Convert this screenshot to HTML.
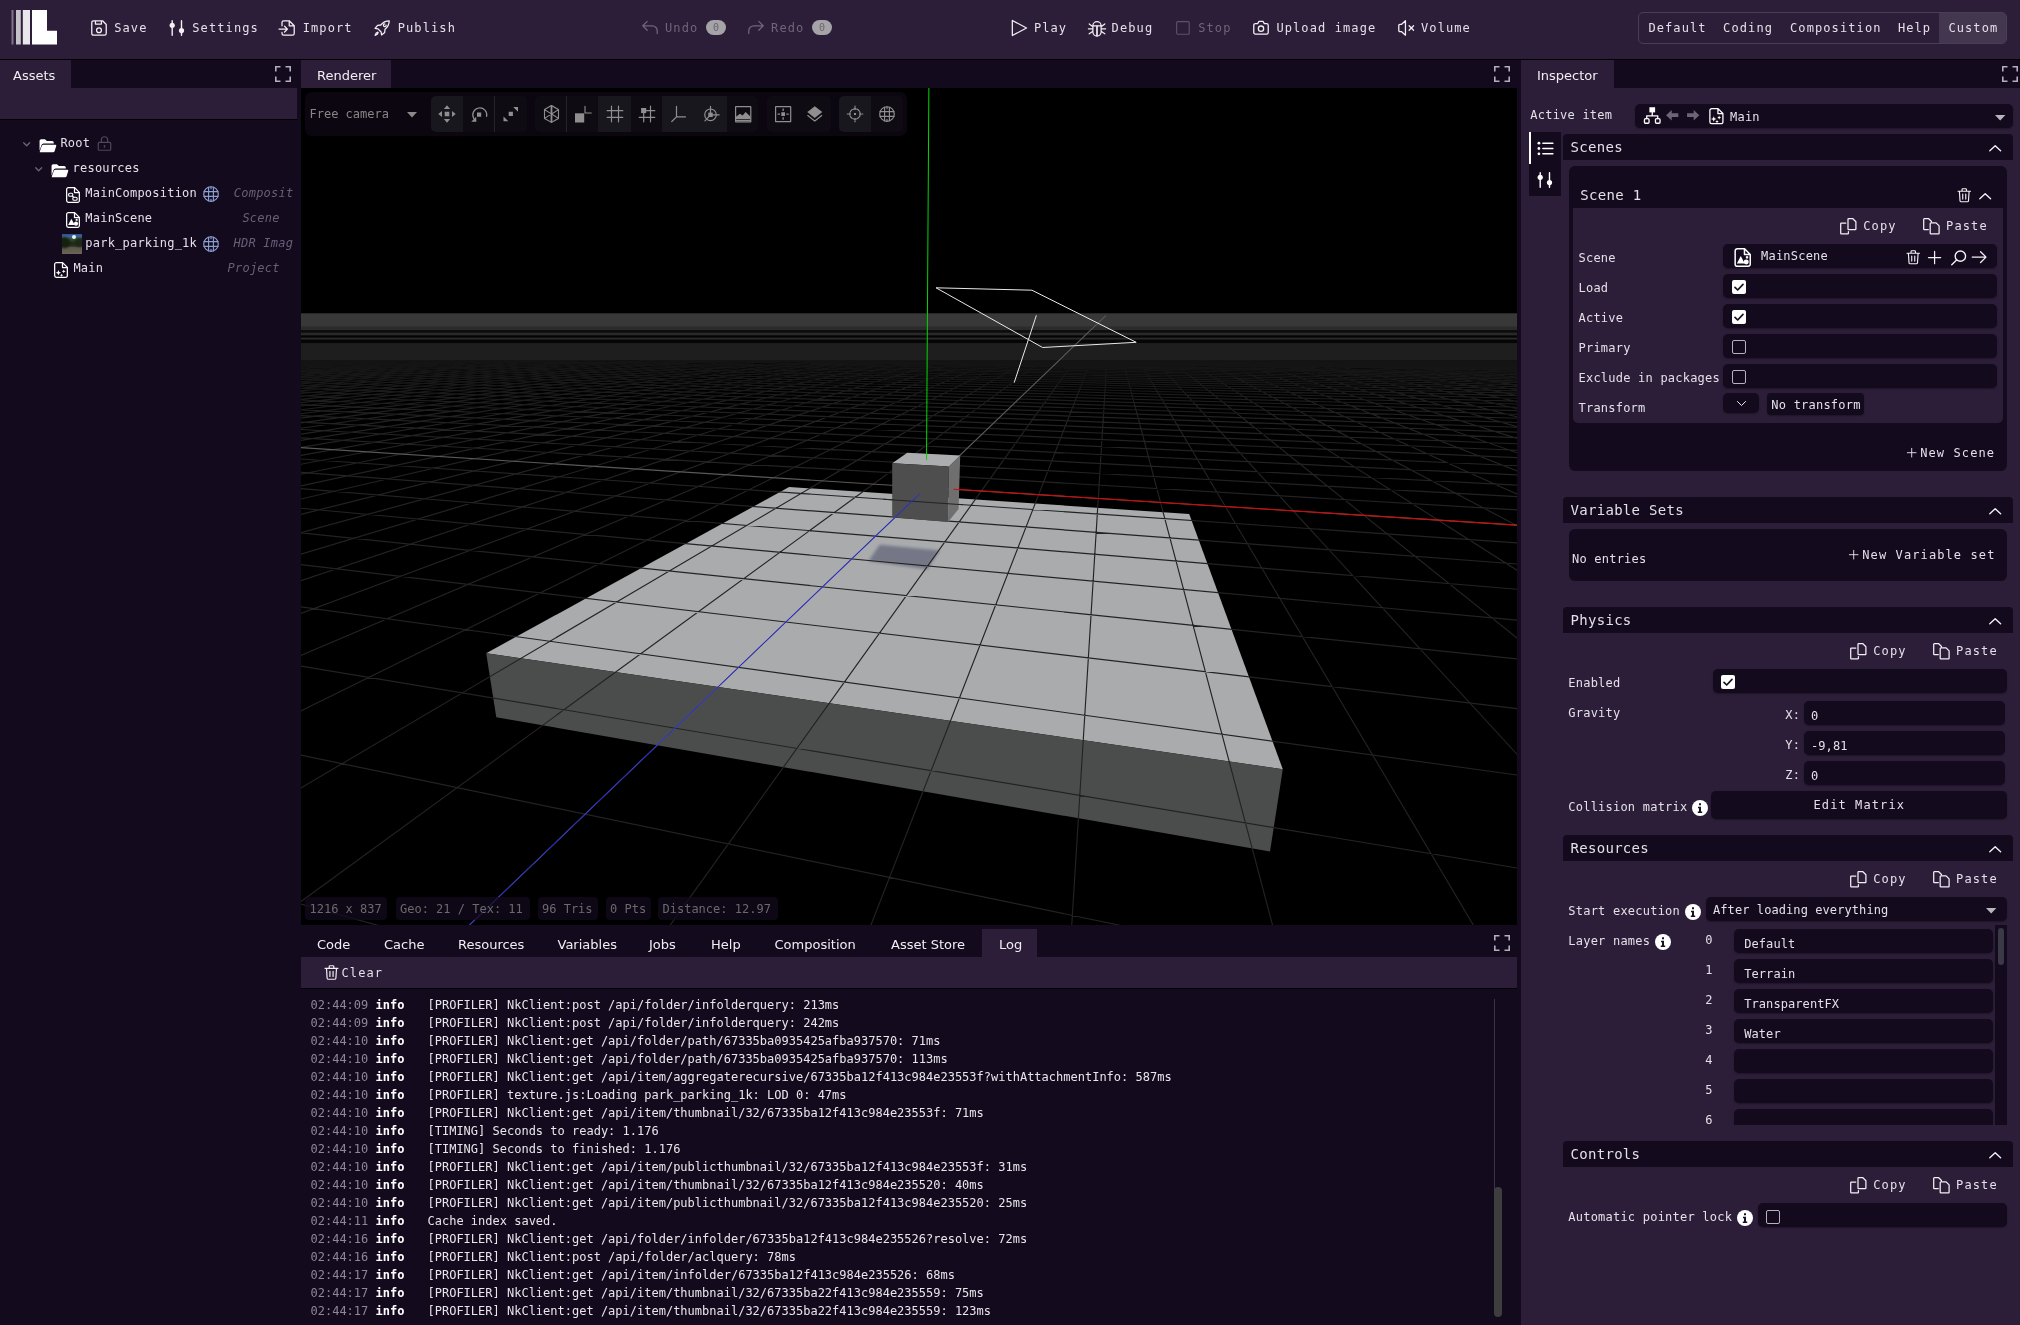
<!DOCTYPE html>
<html lang="en"><head><meta charset="utf-8"><title>Editor</title><style>
*{box-sizing:border-box;margin:0;padding:0}
html,body{width:2020px;height:1325px;overflow:hidden;background:#130a1e}
body{position:relative;font-family:"DejaVu Sans Mono","Liberation Mono",monospace;font-size:12px;color:#e4e0e8;line-height:16px}
.a{position:absolute}
.ic{position:absolute;overflow:visible}
.t{position:absolute;white-space:pre;height:16px;line-height:16px;letter-spacing:.22px}
.t.ls{letter-spacing:1.100px}
#w{position:absolute;left:0;top:0;width:2020px;height:1325px;will-change:transform}
.tab{position:absolute;font-family:"DejaVu Sans","Liberation Sans",sans-serif;font-size:13px;height:28px;line-height:28px;margin-top:1.700px;color:#f0eef2;white-space:pre}
.dim{color:#6f6479}
.h14{font-size:14px;letter-spacing:.3px;height:18px;line-height:18px}
.pill{position:absolute;background:rgba(19,10,30,.72);border-radius:4px;height:23px;top:809px}
.fld{position:absolute;background:#130a1e;border-radius:4px;box-shadow:0 1px 2px rgba(0,0,0,.35)}
.cb{position:absolute;width:14px;height:14px;border-radius:2px}
.cb.on{background:#fff}
.cb.off{border:1.5px solid #b7b1bc}
.log{position:absolute;left:0;white-space:pre;height:18px;line-height:18px;color:#e8e6ea}
.log b{font-weight:bold;color:#fff}
.log i{font-style:normal;color:#8d8796}
</style></head><body>
<div id="w">
<header id="toolbar"><div class="a" style="left:0;top:0;width:2020px;height:59px;background:#2c1e38"></div>
<div class="a" style="left:0;top:59px;width:2020px;height:1px;background:#000"></div>
<svg class="ic" style="left:0;top:0" width="70" height="59" viewBox="0 0 70 59"><rect x="11.5" y="10" width="2" height="34.500" fill="#7d7487"/><rect x="16" y="10" width="4.800" height="34.500" fill="#c6c2ca"/><rect x="22.800" y="10" width="7.200" height="34.500" fill="#e9e7eb"/><path d="M32 10h15v20.700h10V44.500H32z" fill="#fff"/></svg>
<svg class="ic " width="16" height="16" viewBox="0.800 0.800 14.400 14.400" style="left:91px;top:20px;color:#f2f0f4;"><path fill="none" stroke="currentColor" stroke-linecap="round" stroke-linejoin="round" stroke-width="1.150" d="M3 1.5h8.2L14.5 4.8V13a1.5 1.5 0 0 1-1.5 1.5H3A1.5 1.5 0 0 1 1.5 13V3A1.5 1.5 0 0 1 3 1.5zM4.8 1.7v2.8h5.4V1.7"/><circle fill="none" stroke="currentColor" stroke-linecap="round" stroke-linejoin="round" stroke-width="1.150" cx="8" cy="10" r="2.2"/></svg>
<span class="t ls" style="left:114.2px;top:20px;">Save</span>
<svg class="ic " width="16" height="16" viewBox="0 0 16 16" style="left:169px;top:20px;color:#f2f0f4;"><path fill="none" stroke="currentColor" stroke-linecap="round" stroke-linejoin="round" stroke-width="1.400" d="M3.200 0.700v14.600M12.500 0.700v14.600"/><circle fill="currentColor" stroke="none" cx="3.200" cy="5.300" r="2.600"/><circle fill="currentColor" stroke="none" cx="12.500" cy="10.600" r="2.600"/></svg>
<span class="t ls" style="left:192.3px;top:20px;">Settings</span>
<svg class="ic " width="16" height="16" viewBox="0.800 0.800 14.400 14.400" style="left:279px;top:20px;color:#f2f0f4;"><path fill="none" stroke="currentColor" stroke-linecap="round" stroke-linejoin="round" stroke-width="1.150" d="M3.5 6V3A1.5 1.5 0 0 1 5 1.5h5l4.5 4.5V13a1.5 1.5 0 0 1-1.5 1.5H5A1.5 1.5 0 0 1 3.5 13v-1M10 1.7V6h4.3M0.8 9h7.4M5.8 6.4L8.4 9l-2.6 2.6"/></svg>
<span class="t ls" style="left:302.7px;top:20px;">Import</span>
<svg class="ic " width="16" height="16" viewBox="0.800 0.800 14.400 14.400" style="left:374px;top:20px;color:#f2f0f4;"><path fill="none" stroke="currentColor" stroke-linecap="round" stroke-linejoin="round" stroke-width="1.150" d="M14.5 1.5c-3.2 0-5.6 1.2-7.6 3.8L4 5.6 1.8 8.4l2.6.4 2.8 2.8.4 2.6 2.8-2.2.3-2.9c2.6-2 3.8-4.4 3.8-7.600zM4.2 11.800c-1.200.3-2 1.300-2.400 2.800 1.500-.4 2.500-1.200 2.800-2.400M10.500 4.300a1.200 1.200 0 1 0 1.200 1.200"/></svg>
<span class="t ls" style="left:397.7px;top:20px;">Publish</span>
<svg class="ic " width="16" height="16" viewBox="0.800 0.800 14.400 14.400" style="left:642px;top:20px;color:#6f6479;"><path fill="none" stroke="currentColor" stroke-linecap="round" stroke-linejoin="round" stroke-width="1.150" d="M5.500 2L1.500 6l4 4M1.800 6H10a4.500 4.500 0 0 1 4.500 4.500V13"/></svg>
<span class="t ls dim" style="left:665.0px;top:20px;">Undo</span>
<svg class="ic " width="16" height="16" viewBox="0.800 0.800 14.400 14.400" style="left:748px;top:20px;color:#6f6479;"><path fill="none" stroke="currentColor" stroke-linecap="round" stroke-linejoin="round" stroke-width="1.150" d="M10.500 2l4 4-4 4M14.200 6H6A4.500 4.500 0 0 0 1.500 10.500V13"/></svg>
<span class="t ls dim" style="left:771.1px;top:20px;">Redo</span>
<svg class="ic " width="16" height="16" viewBox="0.800 0.800 14.400 14.400" style="left:1011px;top:20px;color:#f2f0f4;"><path fill="none" stroke="currentColor" stroke-linecap="round" stroke-linejoin="round" stroke-width="1.150" d="M2 1.200L14.800 8 2 14.800z"/></svg>
<span class="t ls" style="left:1033.9px;top:20px;">Play</span>
<svg class="ic" width="18" height="16.500" viewBox="0 0 18 16.500" style="left:1088px;top:19.600px;color:#f2f0f4"><path fill="none" stroke="currentColor" stroke-linecap="round" stroke-linejoin="round" stroke-width="1.250" d="M4.900 5.800a4.100 4.100 0 0 1 8.200 0v6.200a4.100 4.100 0 0 1-8.200 0zM5 5.800h8M0.400 8.800h4.500M13.100 8.800h4.500M1.200 4l3.700 2.800M16.800 4l-3.700 2.800M1.200 13.800l3.700-2.600M16.800 13.800l-3.700-2.600"/><path fill="none" stroke="currentColor" stroke-linecap="round" stroke-linejoin="round" stroke-width="1.700" d="M9 6.400v9"/></svg>
<span class="t ls" style="left:1111.6px;top:20px;">Debug</span>
<svg class="ic " width="13.9" height="13.9" viewBox="0.800 0.800 14.400 14.400" style="left:1176px;top:21px;color:#5d5268;"><rect fill="none" stroke="currentColor" stroke-linecap="round" stroke-linejoin="round" stroke-width="1.150" x="1.500" y="1.500" width="13" height="13" rx="1"/></svg>
<span class="t ls dim" style="left:1198.2px;top:20px;">Stop</span>
<svg class="ic " width="16" height="16" viewBox="0.800 0.800 14.400 14.400" style="left:1253px;top:20px;color:#f2f0f4;"><path fill="none" stroke="currentColor" stroke-linecap="round" stroke-linejoin="round" stroke-width="1.150" d="M1.500 5.500A1.500 1.500 0 0 1 3 4h2l1.200-2h3.600L11 4h2a1.500 1.500 0 0 1 1.500 1.500V12a1.500 1.500 0 0 1-1.500 1.500H3A1.500 1.500 0 0 1 1.500 12z"/><circle fill="none" stroke="currentColor" stroke-linecap="round" stroke-linejoin="round" stroke-width="1.150" cx="8" cy="8.600" r="2.400"/></svg>
<span class="t ls" style="left:1276.4px;top:20px;">Upload image</span>
<svg class="ic " width="16" height="16" viewBox="0.800 0.800 14.400 14.400" style="left:1397.5px;top:20px;color:#f2f0f4;"><path fill="none" stroke="currentColor" stroke-linecap="round" stroke-linejoin="round" stroke-width="1.150" d="M7.500 1.500v13L3.800 11.200H2.500a1 1 0 0 1-1-1V5.800a1 1 0 0 1 1-1h1.300zM10.800 6l4 4M14.800 6l-4 4"/></svg>
<span class="t ls" style="left:1421.0px;top:20px;">Volume</span>
<div class="a" style="left:706px;top:20px;width:20px;height:15px;border-radius:8px;background:#a5a2a8;color:#6b6670;font-size:10px;line-height:15px;text-align:center">0</div>
<div class="a" style="left:812px;top:20px;width:20px;height:15px;border-radius:8px;background:#a5a2a8;color:#6b6670;font-size:10px;line-height:15px;text-align:center">0</div>
<div class="a" style="left:1638px;top:12px;width:369px;height:32px;border:1px solid #4a3d56;border-radius:5px"></div>
<div class="a" style="left:1939px;top:13px;width:67px;height:30px;background:#43364f;border-radius:0 4px 4px 0"></div>
<span class="t ls" style="left:1648.4px;top:20px;">Default</span>
<span class="t ls" style="left:1723.1px;top:20px;">Coding</span>
<span class="t ls" style="left:1790.0px;top:20px;">Composition</span>
<span class="t ls" style="left:1897.9px;top:20px;">Help</span>
<span class="t ls" style="left:1948.4px;top:20px;">Custom</span></header>
<aside id="assets"><div class="a" style="left:0px;top:60px;width:71px;height:28px;background:#2c1e38;"></div>
<span class="tab" style="left:13px;top:60px">Assets</span>
<svg class="ic " width="16" height="16" viewBox="0 0 16 16" style="left:275px;top:66px;color:#b5adbd;"><path fill="none" stroke="currentColor" stroke-width="1.600" d="M0.800 5.500V0.800H5.500M10.500 0.800h4.700V5.500M15.200 10.500v4.700H10.500M5.500 15.200H0.800V10.500"/></svg>
<div class="a" style="left:0px;top:88px;width:297px;height:31px;background:#2c1e38;"></div>
<div class="a" style="left:0px;top:119px;width:297px;height:1px;background:#000;"></div>
<svg class="ic " width="7.4" height="4.4" viewBox="0 0 7.4 4.4" style="left:22.500px;top:141.700px"><path fill="none" stroke="#6d6478" stroke-width="1.300" stroke-linecap="round" stroke-linejoin="round" d="M0.700 0.700l3 3 3-3"/></svg>
<svg class="ic " width="17.5" height="17.5" viewBox="0 0 16 16" style="left:38.8px;top:136.5px;color:#fff;"><path fill="currentColor" stroke="none" d="M0.500 3.500A1.500 1.500 0 0 1 2 2h3.400l1.800 1.600H12A1.500 1.500 0 0 1 13.500 5.100V6H4.200a2 2 0 0 0-1.900 1.400L0.500 12.600z"/><path fill="currentColor" stroke="none" d="M4.200 7h10.600a1 1 0 0 1 .95 1.300l-1.500 4.700a1.500 1.500 0 0 1-1.430 1H1.300a.6.6 0 0 1-.57-.8L2.500 8.200A1.800 1.800 0 0 1 4.200 7z"/></svg>
<span class="t " style="left:60.4px;top:134.8px;">Root</span>
<svg class="ic " width="15" height="15" viewBox="0.800 0.800 14.400 14.400" style="left:96.8px;top:136px;color:#4f4658;"><path fill="none" stroke="currentColor" stroke-linecap="round" stroke-linejoin="round" stroke-width="1.150" d="M3 7h10a1 1 0 0 1 1 1v5.500a1 1 0 0 1-1 1H3a1 1 0 0 1-1-1V8a1 1 0 0 1 1-1zM5 7V4.500a3 3 0 0 1 6 0V7"/><path fill="currentColor" stroke="none" d="M7.300 9.500h1.400v2.500H7.300z"/></svg>
<svg class="ic " width="7.4" height="4.4" viewBox="0 0 7.4 4.4" style="left:34.600px;top:166.700px"><path fill="none" stroke="#6d6478" stroke-width="1.300" stroke-linecap="round" stroke-linejoin="round" d="M0.700 0.700l3 3 3-3"/></svg>
<svg class="ic " width="17.5" height="17.5" viewBox="0 0 16 16" style="left:51px;top:161.5px;color:#fff;"><path fill="currentColor" stroke="none" d="M0.500 3.500A1.500 1.500 0 0 1 2 2h3.400l1.800 1.600H12A1.500 1.500 0 0 1 13.500 5.100V6H4.200a2 2 0 0 0-1.900 1.400L0.500 12.600z"/><path fill="currentColor" stroke="none" d="M4.200 7h10.600a1 1 0 0 1 .95 1.300l-1.500 4.700a1.500 1.500 0 0 1-1.430 1H1.300a.6.6 0 0 1-.57-.8L2.500 8.200A1.800 1.800 0 0 1 4.200 7z"/></svg>
<span class="t " style="left:72.6px;top:159.8px;">resources</span>
<svg class="ic" width="14" height="16" viewBox="0 0 14 16" style="left:66px;top:187.2px;color:#fff"><path fill="none" stroke="currentColor" stroke-linecap="round" stroke-linejoin="round" stroke-width="1.250" d="M2.400 0.650h6.200l4.750 4.750v8.200a1.750 1.750 0 0 1-1.750 1.750H2.400A1.750 1.750 0 0 1 .650 13.600V2.400A1.750 1.750 0 0 1 2.400.650zM8.500 0.900v4.600h4.600"/><rect fill="none" stroke="currentColor" stroke-linecap="round" stroke-linejoin="round" stroke-width="1.100" x="2.600" y="6.300" width="4.200" height="2.900" rx="1.300"/><rect fill="none" stroke="currentColor" stroke-linecap="round" stroke-linejoin="round" stroke-width="1.100" x="6.800" y="10.300" width="4.400" height="2.900" rx="1.300"/><path fill="none" stroke="currentColor" stroke-linecap="round" stroke-linejoin="round" stroke-width="1.100" d="M6.300 9l1.600 1.500"/></svg>
<span class="t " style="left:85.3px;top:184.8px;">MainComposition</span>
<svg class="ic " width="16" height="16" viewBox="0 0 16 16" style="left:203px;top:185.8px;color:#8c9fd0;"><circle fill="none" stroke="currentColor" stroke-linecap="round" stroke-linejoin="round" stroke-width="1.150" cx="8" cy="8" r="7.300"/><path fill="none" stroke="currentColor" stroke-linecap="round" stroke-linejoin="round" stroke-width="1.150" d="M1 5.600h14M1 10.400h14M5.600 1.200v13.600M10.400 1.200v13.600M8 0.700v2M8 13.300v2"/></svg>
<span class="t " style="left:233.8px;top:184.8px;font-style:italic;color:#6b5f77">Composit</span>
<svg class="ic" width="14" height="16" viewBox="0 0 14 16" style="left:66px;top:212.1px;color:#fff"><path fill="none" stroke="currentColor" stroke-linecap="round" stroke-linejoin="round" stroke-width="1.250" d="M2.400 0.650h6.200l4.750 4.750v8.200a1.750 1.750 0 0 1-1.750 1.750H2.400A1.750 1.750 0 0 1 .650 13.600V2.400A1.750 1.750 0 0 1 2.400.650zM8.500 0.900v4.600h4.600"/><path fill="currentColor" stroke="none" d="M2.100 13l3.300-6.300 3.300 6.300z"/><circle fill="currentColor" stroke="none" cx="10" cy="11.700" r="2.100"/><path fill="currentColor" stroke="none" d="M9.700 6.900h1.900v1.900H9.700z"/></svg>
<span class="t " style="left:85.3px;top:209.8px;">MainScene</span>
<span class="t " style="left:242.4px;top:209.8px;font-style:italic;color:#6b5f77">Scene</span>
<div class="a" style="left:62px;top:234px;width:20px;height:20px;overflow:hidden;background:linear-gradient(#2f4f86 0,#3e64a0 12%,#33502f 26%,#1d2a18 45%,#2a3020 60%,#5c574a 68%,#6b6557 100%)"><div class="a" style="left:-3px;top:3px;width:11px;height:11px;border-radius:6px;background:#16200f;filter:blur(.8px)"></div><div class="a" style="left:13px;top:4px;width:9px;height:9px;border-radius:5px;background:#1c2914;filter:blur(.8px)"></div><div class="a" style="left:10px;top:1px;width:4px;height:4px;border-radius:2px;background:#e8f0fa;filter:blur(.7px)"></div></div>
<span class="t " style="left:85.3px;top:234.8px;">park_parking_1k</span>
<svg class="ic " width="16" height="16" viewBox="0 0 16 16" style="left:203px;top:236px;color:#8c9fd0;"><circle fill="none" stroke="currentColor" stroke-linecap="round" stroke-linejoin="round" stroke-width="1.150" cx="8" cy="8" r="7.300"/><path fill="none" stroke="currentColor" stroke-linecap="round" stroke-linejoin="round" stroke-width="1.150" d="M1 5.600h14M1 10.400h14M5.600 1.200v13.600M10.400 1.200v13.600M8 0.700v2M8 13.300v2"/></svg>
<span class="t " style="left:233.6px;top:234.8px;font-style:italic;color:#6b5f77">HDR Imag</span>
<svg class="ic" width="14" height="16" viewBox="0 0 14 16" style="left:54.1px;top:261.9px;color:#fff"><path fill="none" stroke="currentColor" stroke-linecap="round" stroke-linejoin="round" stroke-width="1.250" d="M2.400 0.650h6.200l4.750 4.750v8.200a1.750 1.750 0 0 1-1.750 1.750H2.400A1.750 1.750 0 0 1 .650 13.600V2.400A1.750 1.750 0 0 1 2.400.650zM8.500 0.900v4.600h4.600"/><path fill="currentColor" stroke="none" d="M4.400 8l.8 1.900 1.900.8-1.900.8-.8 1.900-.8-1.900-1.900-.8 1.900-.8zM9.700 7.400l.6 1.300 1.300.6-1.300.6-.6 1.300-.6-1.300-1.300-.6 1.300-.6zM7.600 11.700l.5 1.100 1.100.5-1.100.5-.5 1.100-.5-1.100-1.100-.5 1.100-.5z"/></svg>
<span class="t " style="left:73.4px;top:259.8px;">Main</span>
<span class="t " style="left:227.6px;top:259.8px;font-style:italic;color:#6b5f77">Project</span></aside>
<main id="center"><div class="a" style="left:301px;top:60px;width:90px;height:28px;background:#2c1e38;"></div>
<span class="tab" style="left:317px;top:60px">Renderer</span>
<svg class="ic " width="16" height="16" viewBox="0 0 16 16" style="left:1494px;top:66px;color:#b5adbd;"><path fill="none" stroke="currentColor" stroke-width="1.600" d="M0.800 5.500V0.800H5.500M10.500 0.800h4.700V5.500M15.200 10.500v4.700H10.500M5.500 15.200H0.800V10.500"/></svg>
<div class="a" style="left:301px;top:88px;width:1216px;height:837px;overflow:hidden"><svg class="scene" width="1216" height="837" viewBox="0 0 1216 837">
<defs><filter id="sb" x="-30%" y="-30%" width="160%" height="160%"><feGaussianBlur stdDeviation="1.700"/></filter><linearGradient id="dk" x1="0" y1="0" x2="0" y2="1"><stop offset="0" stop-color="#000" stop-opacity="0.55"/><stop offset="0.45" stop-color="#000" stop-opacity="0.45"/><stop offset="1" stop-color="#000" stop-opacity="0"/></linearGradient></defs>
<rect width="1216" height="837" fill="#000"/>
<polygon points="488.1,398.9 888.2,426.0 981.8,681.2 185.2,565.2" fill="#a9abad"/>
<polygon points="185.2,565.2 981.8,681.2 969.0,763.5 195.3,629.3" fill="#4b4d4c"/>
<polygon points="578.7,456.8 638.7,462.5 626.3,481.2 567.5,473.0" fill="#6f7283" opacity="0.9" filter="url(#sb)"/>
<path d="M197.3 229.8L-20.0 232.0M197.3 229.8L1236.0 232.5M198.9 229.8L-20.0 232.0M195.8 229.8L1236.0 232.5M200.5 229.8L-20.0 232.0M194.2 229.8L1236.0 232.6M202.1 229.8L-20.0 232.0M192.7 229.8L1236.0 232.6M203.8 229.8L-20.0 232.1M191.1 229.8L1236.0 232.6M205.4 229.8L-20.0 232.1M189.5 229.8L1236.0 232.7M207.0 229.8L-20.0 232.1M187.9 229.9L1236.0 232.7M208.6 229.8L-20.0 232.2M186.3 229.9L1236.0 232.7M210.2 229.8L-20.0 232.2M184.7 229.9L1236.0 232.7M211.8 229.8L-20.0 232.2M183.1 229.9L1236.0 232.8M213.4 229.8L-20.0 232.2M181.5 229.9L1236.0 232.8M215.1 229.8L-20.0 232.3M179.8 229.9L1236.0 232.8M216.7 229.8L-20.0 232.3M178.2 230.0L1236.0 232.9M218.3 229.8L-20.0 232.3M176.5 230.0L1236.0 232.9M219.9 229.8L-20.0 232.4M174.9 230.0L1236.0 232.9M221.6 229.8L-20.0 232.4M173.2 230.0L1236.0 233.0M223.2 229.8L-20.0 232.4M171.5 230.0L1236.0 233.0M224.8 229.8L-20.0 232.5M169.8 230.0L1236.0 233.0M226.5 229.8L-20.0 232.5M168.1 230.1L1236.0 233.1M228.1 229.8L-20.0 232.5M166.4 230.1L1236.0 233.1M229.7 229.9L-20.0 232.5M164.7 230.1L1236.0 233.1M231.4 229.9L-20.0 232.6M163.0 230.1L1236.0 233.1M233.0 229.9L-20.0 232.6M161.3 230.1L1236.0 233.2M234.7 229.9L-20.0 232.6M159.5 230.1L1236.0 233.2M236.3 229.9L-20.0 232.7M157.8 230.2L1236.0 233.2M238.0 229.9L-20.0 232.7M156.0 230.2L1236.0 233.3M239.6 229.9L-20.0 232.7M154.3 230.2L1236.0 233.3M241.3 229.9L-20.0 232.8M152.5 230.2L1236.0 233.4M243.0 229.9L-20.0 232.8M150.7 230.2L1236.0 233.4M244.6 229.9L-20.0 232.8M148.9 230.3L1236.0 233.4M246.3 229.9L-20.0 232.9M147.1 230.3L1236.0 233.5M248.0 229.9L-20.0 232.9M145.3 230.3L1236.0 233.5M249.6 229.9L-20.0 232.9M143.4 230.3L1236.0 233.5M251.3 229.9L-20.0 233.0M141.6 230.3L1236.0 233.6M253.0 229.9L-20.0 233.0M139.7 230.3L1236.0 233.6M254.7 229.9L-20.0 233.0M137.9 230.4L1236.0 233.6M256.3 229.9L-20.0 233.1M136.0 230.4L1236.0 233.7M258.0 229.9L-20.0 233.1M134.1 230.4L1236.0 233.7M259.7 229.9L-20.0 233.2M132.2 230.4L1236.0 233.7M261.4 229.9L-20.0 233.2M130.3 230.4L1236.0 233.8M263.1 229.9L-20.0 233.2M128.4 230.5L1236.0 233.8M264.8 229.9L-20.0 233.3M126.5 230.5L1236.0 233.9M266.5 229.9L-20.0 233.3M124.6 230.5L1236.0 233.9M268.1 230.0L-20.0 233.3M122.6 230.5L1236.0 233.9M269.8 230.0L-20.0 233.4M120.7 230.5L1236.0 234.0M271.5 230.0L-20.0 233.4M118.7 230.6L1236.0 234.0M273.3 230.0L-20.0 233.4M116.7 230.6L1236.0 234.0M275.0 230.0L-20.0 233.5M114.7 230.6L1236.0 234.1M276.7 230.0L-20.0 233.5M112.7 230.6L1236.0 234.1M278.4 230.0L-20.0 233.6M110.7 230.6L1236.0 234.2M280.1 230.0L-20.0 233.6M108.7 230.7L1236.0 234.2M281.8 230.0L-20.0 233.6M106.7 230.7L1236.0 234.2M283.5 230.0L-20.0 233.7M104.6 230.7L1236.0 234.3M285.2 230.0L-20.0 233.7M102.6 230.7L1236.0 234.3M287.0 230.0L-20.0 233.8M100.5 230.7L1236.0 234.4M288.7 230.0L-20.0 233.8M98.4 230.8L1236.0 234.4M290.4 230.0L-20.0 233.8M96.3 230.8L1236.0 234.5M292.1 230.0L-20.0 233.9M94.2 230.8L1236.0 234.5M293.9 230.0L-20.0 233.9M92.1 230.8L1236.0 234.5M295.6 230.0L-20.0 234.0M90.0 230.8L1236.0 234.6M297.3 230.0L-20.0 234.0M87.8 230.9L1236.0 234.6M299.1 230.0L-20.0 234.1M85.7 230.9L1236.0 234.7M300.8 230.0L-20.0 234.1M83.5 230.9L1236.0 234.7M302.6 230.0L-20.0 234.1M81.3 230.9L1236.0 234.8M304.3 230.0L-20.0 234.2M79.1 231.0L1236.0 234.8M306.1 230.1L-20.0 234.2M76.9 231.0L1236.0 234.8M307.8 230.1L-20.0 234.3M74.7 231.0L1236.0 234.9M309.6 230.1L-20.0 234.3M72.4 231.0L1236.0 234.9M311.3 230.1L-20.0 234.4M70.2 231.0L1236.0 235.0M313.1 230.1L-20.0 234.4M67.9 231.1L1236.0 235.0M314.9 230.1L-20.0 234.5M65.6 231.1L1236.0 235.1M316.6 230.1L-20.0 234.5M63.3 231.1L1236.0 235.1M318.4 230.1L-20.0 234.6M61.0 231.1L1236.0 235.2M320.2 230.1L-20.0 234.6M58.7 231.2L1236.0 235.2M321.9 230.1L-20.0 234.7M56.4 231.2L1236.0 235.3M323.7 230.1L-20.0 234.7M54.0 231.2L1236.0 235.3M325.5 230.1L-20.0 234.7M51.6 231.2L1236.0 235.4M327.3 230.1L-20.0 234.8M49.3 231.3L1236.0 235.4M329.0 230.1L-20.0 234.8M46.9 231.3L1236.0 235.5M330.8 230.1L-20.0 234.9M44.5 231.3L1236.0 235.5M332.6 230.1L-20.0 234.9M42.0 231.3L1236.0 235.6M334.4 230.1L-20.0 235.0M39.6 231.4L1236.0 235.6M336.2 230.1L-20.0 235.1M37.1 231.4L1236.0 235.7M338.0 230.1L-20.0 235.1M34.7 231.4L1236.0 235.7M339.8 230.1L-20.0 235.2M32.2 231.4L1236.0 235.8M341.6 230.1L-20.0 235.2M29.7 231.5L1236.0 235.8M343.4 230.2L-20.0 235.3M27.1 231.5L1236.0 235.9M345.2 230.2L-20.0 235.3M24.6 231.5L1236.0 235.9M347.0 230.2L-20.0 235.4M22.0 231.5L1236.0 236.0M348.8 230.2L-20.0 235.4M19.5 231.6L1236.0 236.0M350.6 230.2L-20.0 235.5M16.9 231.6L1236.0 236.1M352.4 230.2L-20.0 235.5M14.3 231.6L1236.0 236.2M354.3 230.2L-20.0 235.6M11.7 231.6L1236.0 236.2M356.1 230.2L-20.0 235.7M9.0 231.7L1236.0 236.3M357.9 230.2L-20.0 235.7M6.4 231.7L1236.0 236.3M359.7 230.2L-20.0 235.8M3.7 231.7L1236.0 236.4M361.6 230.2L-20.0 235.8M1.0 231.7L1236.0 236.5M363.4 230.2L-20.0 235.9M-1.7 231.8L1236.0 236.5M365.2 230.2L-20.0 235.9M-4.4 231.8L1236.0 236.6M367.1 230.2L-20.0 236.0M-7.2 231.8L1236.0 236.6M368.9 230.2L-20.0 236.1M-10.0 231.9L1236.0 236.7M370.8 230.2L-20.0 236.1M-12.7 231.9L1236.0 236.8M372.6 230.2L-20.0 236.2M-15.5 231.9L1236.0 236.8M374.5 230.2L-20.0 236.3M-18.4 231.9L1236.0 236.9M376.3 230.2L-20.0 236.3M-20.0 232.0L1236.0 236.9M378.2 230.2L-20.0 236.4M-20.0 232.0L1236.0 237.0M380.0 230.2L-20.0 236.4M-20.0 232.1L1236.0 237.1M381.9 230.3L-20.0 236.5M-20.0 232.1L1236.0 237.1M383.7 230.3L-20.0 236.6M-20.0 232.1L1236.0 237.2M385.6 230.3L-20.0 236.6M-20.0 232.2L1236.0 237.3M387.5 230.3L-20.0 236.7M-20.0 232.2L1236.0 237.3M389.3 230.3L-20.0 236.8M-20.0 232.3L1236.0 237.4M391.2 230.3L-20.0 236.8M-20.0 232.3L1236.0 237.5M393.1 230.3L-20.0 236.9M-20.0 232.3L1236.0 237.5M395.0 230.3L-20.0 237.0M-20.0 232.4L1236.0 237.6M396.9 230.3L-20.0 237.1M-20.0 232.4L1236.0 237.7M398.7 230.3L-20.0 237.1M-20.0 232.5L1236.0 237.8M400.6 230.3L-20.0 237.2M-20.0 232.5L1236.0 237.8M402.5 230.3L-20.0 237.3M-20.0 232.6L1236.0 237.9M404.4 230.3L-20.0 237.4M-20.0 232.6L1236.0 238.0M406.3 230.3L-20.0 237.4M-20.0 232.7L1236.0 238.0M408.2 230.3L-20.0 237.5M-20.0 232.7L1236.0 238.1M410.1 230.3L-20.0 237.6M-20.0 232.8L1236.0 238.2M412.0 230.3L-20.0 237.7M-20.0 232.8L1236.0 238.3M413.9 230.3L-20.0 237.7M-20.0 232.9L1236.0 238.4M415.8 230.3L-20.0 237.8M-20.0 232.9L1236.0 238.4M417.7 230.3L-20.0 237.9M-20.0 233.0L1236.0 238.5M419.7 230.4L-20.0 238.0M-20.0 233.0L1236.0 238.6M421.6 230.4L-20.0 238.1M-20.0 233.1L1236.0 238.7M423.5 230.4L-20.0 238.1M-20.0 233.1L1236.0 238.8M425.4 230.4L-20.0 238.2M-20.0 233.2L1236.0 238.8M427.3 230.4L-20.0 238.3M-20.0 233.2L1236.0 238.9M429.3 230.4L-20.0 238.4M-20.0 233.3L1236.0 239.0M431.2 230.4L-20.0 238.5M-20.0 233.3L1236.0 239.1M433.1 230.4L-20.0 238.6M-20.0 233.4L1236.0 239.2M435.1 230.4L-20.0 238.7M-20.0 233.4L1236.0 239.3M437.0 230.4L-20.0 238.8M-20.0 233.5L1236.0 239.4M439.0 230.4L-20.0 238.8M-20.0 233.5L1236.0 239.4M440.9 230.4L-20.0 238.9M-20.0 233.6L1236.0 239.5M442.9 230.4L-20.0 239.0M-20.0 233.7L1236.0 239.6M444.8 230.4L-20.0 239.1M-20.0 233.7L1236.0 239.7M446.8 230.4L-20.0 239.2M-20.0 233.8L1236.0 239.8M448.7 230.4L-20.0 239.3M-20.0 233.8L1236.0 239.9M450.7 230.4L-20.0 239.4M-20.0 233.9L1236.0 240.0M452.7 230.4L-20.0 239.5M-20.0 234.0L1236.0 240.1M454.6 230.4L-20.0 239.6M-20.0 234.0L1236.0 240.2M456.6 230.4L-20.0 239.7M-20.0 234.1L1236.0 240.3M458.6 230.5L-20.0 239.8M-20.0 234.1L1236.0 240.4M460.6 230.5L-20.0 239.9M-20.0 234.2L1236.0 240.5M462.5 230.5L-20.0 240.0M-20.0 234.3L1236.0 240.6M464.5 230.5L-20.0 240.1M-20.0 234.3L1236.0 240.7M466.5 230.5L-20.0 240.2M-20.0 234.4L1236.0 240.8M468.5 230.5L-20.0 240.4M-20.0 234.5L1236.0 240.9M470.5 230.5L-20.0 240.5M-20.0 234.5L1236.0 241.0M472.5 230.5L-20.0 240.6M-20.0 234.6L1236.0 241.1M474.5 230.5L-20.0 240.7M-20.0 234.7L1236.0 241.2M476.5 230.5L-20.0 240.8M-20.0 234.7L1236.0 241.4M478.5 230.5L-20.0 240.9M-20.0 234.8L1236.0 241.5M480.5 230.5L-20.0 241.0M-20.0 234.9L1236.0 241.6M482.5 230.5L-20.0 241.2M-20.0 235.0L1236.0 241.7M484.5 230.5L-20.0 241.3M-20.0 235.0L1236.0 241.8M486.6 230.5L-20.0 241.4M-20.0 235.1L1236.0 241.9M488.6 230.5L-20.0 241.5M-20.0 235.2L1236.0 242.1M490.6 230.5L-20.0 241.7M-20.0 235.3L1236.0 242.2M492.6 230.5L-20.0 241.8M-20.0 235.3L1236.0 242.3M494.7 230.6L-20.0 241.9M-20.0 235.4L1236.0 242.4M496.7 230.6L-20.0 242.1M-20.0 235.5L1236.0 242.6M498.7 230.6L-20.0 242.2M-20.0 235.6L1236.0 242.7M500.8 230.6L-20.0 242.3M-20.0 235.7L1236.0 242.8M502.8 230.6L-20.0 242.5M-20.0 235.8L1236.0 243.0M504.8 230.6L-20.0 242.6M-20.0 235.8L1236.0 243.1M506.9 230.6L-20.0 242.8M-20.0 235.9L1236.0 243.2M508.9 230.6L-20.0 242.9M-20.0 236.0L1236.0 243.4M511.0 230.6L-20.0 243.1M-20.0 236.1L1236.0 243.5M513.1 230.6L-20.0 243.2M-20.0 236.2L1236.0 243.7M515.1 230.6L-20.0 243.4M-20.0 236.3L1236.0 243.8M517.2 230.6L-20.0 243.5M-20.0 236.4L1236.0 244.0M519.3 230.6L-20.0 243.7M-20.0 236.5L1236.0 244.1M521.3 230.6L-20.0 243.8M-20.0 236.6L1236.0 244.3M523.4 230.6L-20.0 244.0M-20.0 236.7L1236.0 244.4M525.5 230.6L-20.0 244.2M-20.0 236.8L1236.0 244.6M527.6 230.6L-20.0 244.3M-20.0 236.9L1236.0 244.7M529.6 230.6L-20.0 244.5M-20.0 237.0L1236.0 244.9M531.7 230.6L-20.0 244.7M-20.0 237.1L1236.0 245.1M533.8 230.7L-20.0 244.9M-20.0 237.2L1236.0 245.2M535.9 230.7L-20.0 245.0M-20.0 237.3L1236.0 245.4M538.0 230.7L-20.0 245.2M-20.0 237.4L1236.0 245.6M540.1 230.7L-20.0 245.4M-20.0 237.5L1236.0 245.7M542.2 230.7L-20.0 245.6M-20.0 237.6L1236.0 245.9M544.3 230.7L-20.0 245.8M-20.0 237.7L1236.0 246.1M546.4 230.7L-20.0 246.0M-20.0 237.8L1236.0 246.3M548.6 230.7L-20.0 246.2M-20.0 237.9L1236.0 246.5M550.7 230.7L-20.0 246.4M-20.0 238.1L1236.0 246.6M552.8 230.7L-20.0 246.6M-20.0 238.2L1236.0 246.8M554.9 230.7L-20.0 246.8M-20.0 238.3L1236.0 247.0M557.0 230.7L-20.0 247.0M-20.0 238.4L1236.0 247.2M559.2 230.7L-20.0 247.2M-20.0 238.6L1236.0 247.4M561.3 230.7L-20.0 247.5M-20.0 238.7L1236.0 247.6M563.4 230.7L-20.0 247.7M-20.0 238.8L1236.0 247.8M565.6 230.7L-20.0 247.9M-20.0 238.9L1236.0 248.1M567.7 230.7L-20.0 248.1M-20.0 239.1L1236.0 248.3M569.9 230.7L-20.0 248.4M-20.0 239.2L1236.0 248.5M572.0 230.8L-20.0 248.6M-20.0 239.4L1236.0 248.7M574.2 230.8L-20.0 248.9M-20.0 239.5L1236.0 249.0M576.3 230.8L-20.0 249.1M-20.0 239.7L1236.0 249.2M578.5 230.8L-20.0 249.4M-20.0 239.8L1236.0 249.4M580.7 230.8L-20.0 249.7M-20.0 240.0L1236.0 249.7M582.8 230.8L-20.0 249.9M-20.0 240.1L1236.0 249.9M585.0 230.8L-20.0 250.2M-20.0 240.3L1236.0 250.2M587.2 230.8L-20.0 250.5M-20.0 240.4L1236.0 250.4M589.4 230.8L-20.0 250.8M-20.0 240.6L1236.0 250.7M591.5 230.8L-20.0 251.1M-20.0 240.8L1236.0 250.9M593.7 230.8L-20.0 251.4M-20.0 240.9L1236.0 251.2M595.9 230.8L-20.0 251.7M-20.0 241.1L1236.0 251.5M598.1 230.8L-20.0 252.0M-20.0 241.3L1236.0 251.8M600.3 230.8L-20.0 252.3M-20.0 241.5L1236.0 252.1M602.5 230.8L-20.0 252.7M-20.0 241.6L1236.0 252.3M604.7 230.8L-20.0 253.0M-20.0 241.8L1236.0 252.6M606.9 230.8L-20.0 253.3M-20.0 242.0L1236.0 253.0M609.1 230.9L-20.0 253.7M-20.0 242.2L1236.0 253.3M611.3 230.9L-20.0 254.0M-20.0 242.4L1236.0 253.6M613.6 230.9L-20.0 254.4M-20.0 242.6L1236.0 253.9M615.8 230.9L-20.0 254.8M-20.0 242.8L1236.0 254.2M618.0 230.9L-20.0 255.2M-20.0 243.0L1236.0 254.6M620.2 230.9L-20.0 255.6M-20.0 243.3L1236.0 254.9M622.5 230.9L-20.0 256.0M-20.0 243.5L1236.0 255.3M624.7 230.9L-20.0 256.4M-20.0 243.7L1236.0 255.7M626.9 230.9L-20.0 256.8M-20.0 243.9L1236.0 256.0M629.2 230.9L-20.0 257.3M-20.0 244.2L1236.0 256.4M631.4 230.9L-20.0 257.7M-20.0 244.4L1236.0 256.8M633.7 230.9L-20.0 258.2M-20.0 244.7L1236.0 257.2M635.9 230.9L-20.0 258.7M-20.0 244.9L1236.0 257.6M638.2 230.9L-20.0 259.2M-20.0 245.2L1236.0 258.0M640.5 230.9L-20.0 259.7M-20.0 245.5L1236.0 258.5M642.7 230.9L-20.0 260.2M-20.0 245.8L1236.0 258.9M645.0 230.9L-20.0 260.7M-20.0 246.0L1236.0 259.4M647.3 231.0L-20.0 261.3M-20.0 246.3L1236.0 259.8M649.5 231.0L-20.0 261.9M-20.0 246.6L1236.0 260.3M651.8 231.0L-20.0 262.5M-20.0 246.9L1236.0 260.8M654.1 231.0L-20.0 263.1M-20.0 247.2L1236.0 261.3M656.4 231.0L-20.0 263.7M-20.0 247.6L1236.0 261.8M658.7 231.0L-20.0 264.3M-20.0 247.9L1236.0 262.3M661.0 231.0L-20.0 265.0M-20.0 248.2L1236.0 262.9M663.3 231.0L-20.0 265.7M-20.0 248.6L1236.0 263.4M665.6 231.0L-20.0 266.4M-20.0 249.0L1236.0 264.0M667.9 231.0L-20.0 267.1M-20.0 249.3L1236.0 264.6M670.2 231.0L-20.0 267.9M-20.0 249.7L1236.0 265.2M672.5 231.0L-20.0 268.7M-20.0 250.1L1236.0 265.9M674.8 231.0L-20.0 269.5M-20.0 250.5L1236.0 266.5M677.1 231.0L-20.0 270.3M-20.0 250.9L1236.0 267.2M679.5 231.0L-20.0 271.2M-20.0 251.4L1236.0 267.9M681.8 231.0L-20.0 272.1M-20.0 251.8L1236.0 268.6M684.1 231.1L-20.0 273.1M-20.0 252.3L1236.0 269.3M686.5 231.1L-20.0 274.1M-20.0 252.8L1236.0 270.1M688.8 231.1L-20.0 275.1M-20.0 253.3L1236.0 270.9M691.1 231.1L-20.0 276.2M-20.0 253.8L1236.0 271.7M693.5 231.1L-20.0 277.3M-20.0 254.3L1236.0 272.5M695.8 231.1L-20.0 278.4M-20.0 254.9L1236.0 273.4M698.2 231.1L-20.0 279.7M-20.0 255.4L1236.0 274.3M700.6 231.1L-20.0 280.9M-20.0 256.0L1236.0 275.3M702.9 231.1L-20.0 282.2M-20.0 256.6L1236.0 276.2M705.3 231.1L-20.0 283.6M-20.0 257.3L1236.0 277.2M707.7 231.1L-20.0 285.1M-20.0 257.9L1236.0 278.3M710.0 231.1L-20.0 286.6M-20.0 258.6L1236.0 279.4M712.4 231.1L-20.0 288.2M-20.0 259.3L1236.0 280.5M714.8 231.1L-20.0 289.9M-20.0 260.1L1236.0 281.7M717.2 231.1L-20.0 291.7M-20.0 260.8L1236.0 282.9M719.6 231.1L-20.0 293.6M-20.0 261.6L1236.0 284.2M722.0 231.2L-20.0 295.6M-20.0 262.5L1236.0 285.6M724.4 231.2L-20.0 297.7M-20.0 263.4L1236.0 287.0M726.8 231.2L-20.0 299.9M-20.0 264.3L1236.0 288.5M729.2 231.2L-20.0 302.3M-20.0 265.3L1236.0 290.0M731.6 231.2L-20.0 304.8M-20.0 266.3L1236.0 291.6M734.0 231.2L-20.0 307.5M-20.0 267.4L1236.0 293.3M736.4 231.2L-20.0 310.4M-20.0 268.5L1236.0 295.1M738.9 231.2L-20.0 313.5M-20.0 269.7L1236.0 297.0M741.3 231.2L-20.0 316.8M-20.0 270.9L1236.0 299.0M743.7 231.2L-20.0 320.3M-20.0 272.2L1236.0 301.1M746.2 231.2L-20.0 324.2M-20.0 273.6L1236.0 303.3M748.6 231.2L-20.0 328.3M-20.0 275.1L1236.0 305.6M751.0 231.2L-20.0 332.8M-20.0 276.6L1236.0 308.1M753.5 231.2L-20.0 337.7M-20.0 278.3L1236.0 310.8M756.0 231.2L-20.0 343.1M-20.0 280.1L1236.0 313.6M758.4 231.2L-20.0 349.1M-20.0 282.0L1236.0 316.6M760.9 231.3L-20.0 355.6M-20.0 284.0L1236.0 319.8M763.3 231.3L-20.0 362.8M-20.0 286.1L1236.0 323.2M765.8 231.3L-20.0 370.9M-20.0 288.4L1236.0 326.9M768.3 231.3L-20.0 380.0M-20.0 290.9L1236.0 330.9M770.8 231.3L-20.0 390.3M-20.0 293.6L1236.0 335.2M773.2 231.3L-20.0 402.1M-20.0 296.6L1236.0 339.9M775.7 231.3L-20.0 415.6M-20.0 299.7L1236.0 344.9M778.2 231.3L-20.0 431.4M-20.0 303.2L1236.0 350.4M780.7 231.3L-20.0 450.0M-20.0 307.0L1236.0 356.5M783.2 231.3L-20.0 472.2M-20.0 311.2L1236.0 363.1M785.7 231.3L-20.0 499.2M-20.0 315.8L1236.0 370.5M788.2 231.3L-20.0 532.9M-20.0 320.9L1236.0 378.7M790.7 231.3L-20.0 575.9M-20.0 326.6L1236.0 387.8M793.3 231.3L-20.0 632.8M-20.0 333.1L1236.0 398.1M795.8 231.3L-20.0 711.6M-20.0 340.4L1236.0 409.7M798.3 231.4L-20.0 828.1M-20.0 348.7L1236.0 423.0M803.4 231.4L354.9 857.0M-20.0 369.6L1236.0 456.3M805.9 231.4L562.2 857.0M-20.0 382.9L1236.0 477.5M808.4 231.4L769.5 857.0M-20.0 398.9L1236.0 502.9M811.0 231.4L976.8 857.0M-20.0 418.4L1236.0 534.0M813.5 231.4L1184.1 857.0M-20.0 442.8L1236.0 572.9M816.1 231.4L1236.0 688.0M-20.0 474.2L1236.0 623.0M818.7 231.4L1236.0 566.1M-20.0 516.1L1236.0 689.8M821.2 231.4L1236.0 494.9M-20.0 574.8L1236.0 783.3M823.8 231.4L1236.0 448.2M-20.0 663.0L913.7 857.0M826.4 231.4L1236.0 415.2M-20.0 810.5L147.8 857.0M829.0 231.4L1236.0 390.7M831.5 231.4L1236.0 371.7M834.1 231.4L1236.0 356.6M836.7 231.5L1236.0 344.3M839.3 231.5L1236.0 334.1M841.9 231.5L1236.0 325.5M844.5 231.5L1236.0 318.1M847.1 231.5L1236.0 311.7M849.7 231.5L1236.0 306.1M852.4 231.5L1236.0 301.2M855.0 231.5L1236.0 296.9M857.6 231.5L1236.0 293.0M860.2 231.5L1236.0 289.5M862.9 231.5L1236.0 286.3M865.5 231.5L1236.0 283.4M868.2 231.5L1236.0 280.8M870.8 231.5L1236.0 278.4M873.5 231.6L1236.0 276.2M876.1 231.6L1236.0 274.2M878.8 231.6L1236.0 272.3M881.5 231.6L1236.0 270.5M884.2 231.6L1236.0 268.9M886.8 231.6L1236.0 267.4M889.5 231.6L1236.0 266.0M892.2 231.6L1236.0 264.6M894.9 231.6L1236.0 263.4M897.6 231.6L1236.0 262.2M900.3 231.6L1236.0 261.1M903.0 231.6L1236.0 260.0M905.7 231.6L1236.0 259.1M908.4 231.6L1236.0 258.1M911.2 231.7L1236.0 257.2M913.9 231.7L1236.0 256.4M916.6 231.7L1236.0 255.6M919.4 231.7L1236.0 254.8M922.1 231.7L1236.0 254.1M924.9 231.7L1236.0 253.4M927.6 231.7L1236.0 252.7M930.4 231.7L1236.0 252.1M933.1 231.7L1236.0 251.5M935.9 231.7L1236.0 250.9M938.7 231.7L1236.0 250.3M941.5 231.7L1236.0 249.8M944.2 231.7L1236.0 249.3M947.0 231.7L1236.0 248.8M949.8 231.8L1236.0 248.3M952.6 231.8L1236.0 247.9M955.4 231.8L1236.0 247.4M958.2 231.8L1236.0 247.0M961.0 231.8L1236.0 246.6M963.9 231.8L1236.0 246.2M966.7 231.8L1236.0 245.8M969.5 231.8L1236.0 245.4M972.3 231.8L1236.0 245.1M975.2 231.8L1236.0 244.7M978.0 231.8L1236.0 244.4M980.9 231.8L1236.0 244.1M983.7 231.8L1236.0 243.7M986.6 231.9L1236.0 243.4M989.5 231.9L1236.0 243.1M992.3 231.9L1236.0 242.8M995.2 231.9L1236.0 242.6M998.1 231.9L1236.0 242.3M1001.0 231.9L1236.0 242.0M1003.9 231.9L1236.0 241.8M1006.8 231.9L1236.0 241.5M1009.7 231.9L1236.0 241.3M1012.6 231.9L1236.0 241.0M1015.5 231.9L1236.0 240.8M1018.4 231.9L1236.0 240.6M1021.3 231.9L1236.0 240.4M1024.3 231.9L1236.0 240.2M1027.2 232.0L1236.0 240.0M1030.1 232.0L1236.0 239.7M1033.1 232.0L1236.0 239.6M1036.0 232.0L1236.0 239.4M1039.0 232.0L1236.0 239.2M1041.9 232.0L1236.0 239.0M1044.9 232.0L1236.0 238.8M1047.9 232.0L1236.0 238.6M1050.9 232.0L1236.0 238.5M1053.8 232.0L1236.0 238.3M1056.8 232.0L1236.0 238.1M1059.8 232.0L1236.0 238.0M1062.8 232.1L1236.0 237.8M1065.8 232.1L1236.0 237.7M1068.9 232.1L1236.0 237.5M1071.9 232.1L1236.0 237.4M1074.9 232.1L1236.0 237.2M1077.9 232.1L1236.0 237.1M1081.0 232.1L1236.0 236.9M1084.0 232.1L1236.0 236.8M1087.0 232.1L1236.0 236.7M1090.1 232.1L1236.0 236.5M1093.2 232.1L1236.0 236.4M1096.2 232.1L1236.0 236.3M1099.3 232.1L1236.0 236.2M1102.4 232.2L1236.0 236.1M1105.5 232.2L1236.0 235.9M1108.5 232.2L1236.0 235.8M1111.6 232.2L1236.0 235.7M1114.7 232.2L1236.0 235.6M1117.8 232.2L1236.0 235.5M1120.9 232.2L1236.0 235.4M1124.1 232.2L1236.0 235.3M1127.2 232.2L1236.0 235.2M1130.3 232.2L1236.0 235.1M1133.5 232.2L1236.0 235.0M1136.6 232.2L1236.0 234.9M1139.7 232.3L1236.0 234.8M1142.9 232.3L1236.0 234.7M1146.1 232.3L1236.0 234.6M1149.2 232.3L1236.0 234.5M1152.4 232.3L1236.0 234.4M1155.6 232.3L1236.0 234.3M1158.8 232.3L1236.0 234.2M1161.9 232.3L1236.0 234.1M1165.1 232.3L1236.0 234.1M1168.3 232.3L1236.0 234.0M1171.6 232.3L1236.0 233.9M1174.8 232.3L1236.0 233.8M1178.0 232.4L1236.0 233.7M1181.2 232.4L1236.0 233.7M1184.4 232.4L1236.0 233.6M1187.7 232.4L1236.0 233.5M1190.9 232.4L1236.0 233.4M1194.2 232.4L1236.0 233.4M1197.4 232.4L1236.0 233.3M1200.7 232.4L1236.0 233.2M1204.0 232.4L1236.0 233.1M1207.3 232.4L1236.0 233.1M1210.5 232.4L1236.0 233.0M1213.8 232.5L1236.0 232.9M1217.1 232.5L1236.0 232.9M1220.4 232.5L1236.0 232.8M1223.7 232.5L1236.0 232.7M1227.1 232.5L1236.0 232.7M1230.4 232.5L1236.0 232.6M1233.7 232.5L1236.0 232.6" stroke="#232323" stroke-width="1.150" fill="none"/>
<rect x="0" y="224.7" width="1216" height="110" fill="url(#dk)"/>
<rect x="0" y="225.3" width="1216" height="13.600" fill="#383838"/>
<rect x="0" y="238.9" width="1216" height="3.4" fill="#2b2b2b"/>
<rect x="0" y="242.3" width="1216" height="2.4" fill="#0c0c0c"/>
<rect x="0" y="244.7" width="1216" height="2.8" fill="#292929"/>
<rect x="0" y="247.5" width="1216" height="2.2" fill="#050505"/>
<rect x="0" y="249.7" width="1216" height="2.0" fill="#2a2a2a"/>
<rect x="0" y="251.7" width="1216" height="3.4" fill="#060606"/>
<rect x="0" y="255.1" width="1216" height="17.0" fill="#1e1e1e"/>
<path d="M-20.0 358.4L625.3 399.5M804.8 227.6L625.3 399.5M625.3 399.5L147.6 857.0M625.3 399.5L1236.0 438.4" stroke="#5a5a5a" stroke-width="1.100" fill="none"/>
<polygon points="606.3,364.8 659.2,367.4 647.9,378.4 591.2,375.2" fill="#abadaf"/>
<polygon points="591.2,375.2 647.9,378.4 647.0,434.0 591.2,429.2" fill="#4d4e4d"/>
<polygon points="647.9,378.4 659.2,367.4 657.6,420.9 647.0,434.0" fill="#6f6f6f"/>
<path d="M582.4 411.2L661.7 416.7" stroke="#232323" stroke-width="1.150" fill="none"/>
<path d="M652.6 401.2L1236.0 438.4" stroke="#e40000" stroke-width="1" fill="none"/>
<path d="M625.5 372.2L628.0 -20.0" stroke="#00d800" stroke-width="1" fill="none"/>
<path d="M618.4 406.1L147.6 857.0" stroke="#2424f4" stroke-width="1" fill="none"/>
<polygon points="635.0,199.8 730.9,202.2 835.2,254.3 741.6,259.5" fill="none" stroke="#e8e8e8" stroke-width="1"/>
<path d="M735.4 227.3L713.2 294.6" stroke="#e8e8e8" stroke-width="1" fill="none"/>
</svg>
<div class="a" style="left:4px;top:4px;width:602px;height:44px;border-radius:7px;background:rgba(20,10,28,.62)"></div>
<span class="t " style="left:8.5px;top:18px;color:#868686;letter-spacing:0">Free camera</span>
<svg class="ic " width="10" height="6" viewBox="0 0 10 6" style="left:105.500px;top:23.500px"><path fill="#8a8a8a" d="M0 0h10L5 5.500z"/></svg>
<div class="a" style="left:130px;top:8px;width:32px;height:35.500px;background:#18171d;border-radius:5px 0 0 5px"></div>
<svg class="ic" width="18" height="18" viewBox="0 0 18 18" style="left:137.0px;top:17.0px;color:#8f8f8f"><path fill="currentColor" stroke="none" d="M9 0.300l3.100 3.700H5.900zM9 17.700l3.100-3.700H5.900zM0.300 9l3.700-3.100v6.200zM17.700 9l-3.700-3.100v6.200zM6.700 6.700h4.600v4.600H6.700z"/></svg>
<div class="a" style="left:162px;top:8px;width:32px;height:35.500px;background:#0e0b13;border-radius:0"></div>
<svg class="ic" width="17" height="17" viewBox="0 0 17 17" style="left:169.5px;top:17.5px;color:#8f8f8f"><path fill="none" stroke="currentColor" stroke-linecap="round" stroke-linejoin="round" stroke-width="1.200" d="M2.700 12.400A7 7 0 1 1 15.600 10.500"/><path fill="currentColor" stroke="none" d="M0.300 15.800l4.800-5 .3 5zM6 6.500h4.200v4.200H6z"/></svg>
<div class="a" style="left:194px;top:8px;width:32px;height:35.500px;background:#0e0b13;border-radius:0 5px 5px 0"></div>
<svg class="ic" width="16" height="16" viewBox="0 0 16 16" style="left:202.0px;top:18.0px;color:#8f8f8f"><path fill="currentColor" stroke="none" d="M10.200 1h4.800v4.800zM0.500 10.400v4.800h4.800zM5.700 5.800h4.200V10H5.700z"/></svg>
<div class="a" style="left:234px;top:8px;width:32px;height:35.500px;background:#0e0b13;border-radius:5px 0 0 5px"></div>
<svg class="ic" width="17" height="18.3" viewBox="0 0 17 18.3" style="left:241.5px;top:16.85px;color:#8f8f8f"><path fill="none" stroke="currentColor" stroke-linecap="round" stroke-linejoin="round" stroke-width="1.100" d="M8.500 0.600l7 4v8.800l-7 4-7-4V4.600zM1.500 4.600l14 8.800M15.500 4.600l-14 8.800"/><path fill="none" stroke="currentColor" stroke-linecap="round" stroke-linejoin="round" stroke-width="1.800" d="M8.500 1v16"/></svg>
<div class="a" style="left:266px;top:8px;width:31px;height:35.500px;background:#0e0b13;border-radius:0"></div>
<svg class="ic" width="16.5" height="16.5" viewBox="0 0 16.5 16.5" style="left:273.75px;top:17.75px;color:#8f8f8f"><path fill="currentColor" stroke="none" d="M0 7.300h9.200v9.200H0z"/><path fill="none" stroke="currentColor" stroke-linecap="round" stroke-linejoin="round" stroke-width="1.100" d="M10 0.300V7h6.300"/></svg>
<div class="a" style="left:297px;top:8px;width:33px;height:35.500px;background:#18171d;border-radius:0"></div>
<svg class="ic" width="16" height="16" viewBox="0 0 16 16" style="left:306.0px;top:18.0px;color:#8f8f8f"><path fill="none" stroke="currentColor" stroke-linecap="round" stroke-linejoin="round" stroke-width="1.200" d="M4.500 0.200v15.600M11.500 0.200v15.600M0.200 4.700h15.600M0.200 11.300h15.600"/></svg>
<div class="a" style="left:330px;top:8px;width:31px;height:35.500px;background:#0e0b13;border-radius:0"></div>
<svg class="ic" width="16" height="16" viewBox="0 0 16 16" style="left:338.0px;top:18.0px;color:#8f8f8f"><path fill="none" stroke="currentColor" stroke-linecap="round" stroke-linejoin="round" stroke-width="1.200" d="M4.700 7v8.800M11.500 0.200v15.600M7 4.700h8.800M0.200 11.300h15.600"/><path fill="currentColor" stroke="none" d="M2.100 2h5.100v5.100H2.100z"/></svg>
<div class="a" style="left:361px;top:8px;width:33px;height:35.500px;background:#18171d;border-radius:0"></div>
<svg class="ic" width="16" height="16" viewBox="0 0 16 16" style="left:370.0px;top:18.0px;color:#8f8f8f"><path fill="none" stroke="currentColor" stroke-linecap="round" stroke-linejoin="round" stroke-width="1.200" d="M5.500 0.300V10.800H14.500M5.500 10.800L0.800 15.500"/></svg>
<div class="a" style="left:394px;top:8px;width:32px;height:35.500px;background:#18171d;border-radius:0"></div>
<svg class="ic" width="16" height="16" viewBox="0 0 16 16" style="left:402.7px;top:18.0px;color:#8f8f8f"><circle fill="none" stroke="currentColor" stroke-linecap="round" stroke-linejoin="round" stroke-width="1.200" cx="6.500" cy="8.800" r="5.800"/><path fill="none" stroke="currentColor" stroke-linecap="round" stroke-linejoin="round" stroke-width="1.200" d="M6.500 0.300V8.800H15.200M6.500 8.800L1 14.800"/><path fill="currentColor" stroke="none" d="M4.300 6.600h4.400V11H4.300z"/></svg>
<div class="a" style="left:426px;top:8px;width:31px;height:35.500px;background:#0e0b13;border-radius:0 5px 5px 0"></div>
<svg class="ic" width="16.4" height="16.4" viewBox="0 0 16.4 16.4" style="left:433.90000000000003px;top:17.8px;color:#8f8f8f"><rect fill="none" stroke="currentColor" stroke-linecap="round" stroke-linejoin="round" stroke-width="1.200" x="0.600" y="0.600" width="15.200" height="15.200" rx=".3"/><path fill="currentColor" stroke="none" d="M1 13.200l0-2.400 4-3 2.600 1.800 3-3.500 4.800 4.500v2.600z"/><path fill="none" stroke="currentColor" stroke-linecap="round" stroke-linejoin="round" stroke-width="1" d="M1 14.500h14.400"/></svg>
<div class="a" style="left:466px;top:8px;width:32px;height:35.500px;background:#0e0b13;border-radius:5px 0 0 5px"></div>
<svg class="ic" width="16.3" height="16.3" viewBox="0 0 16.3 16.3" style="left:473.85px;top:17.85px;color:#8f8f8f"><rect fill="none" stroke="currentColor" stroke-linecap="round" stroke-linejoin="round" stroke-width="1.200" x="0.600" y="0.600" width="15.100" height="15.100" rx=".3"/><path fill="currentColor" stroke="none" d="M6.300 6.300h3.700V10H6.300zM7.500 2.600h1.300v2.400H7.500zM7.500 11.300h1.300v2.400H7.500zM2.600 7.500H5v1.300H2.600zM11.300 7.500h2.400v1.300h-2.400z"/></svg>
<div class="a" style="left:498px;top:8px;width:32px;height:35.500px;background:#0e0b13;border-radius:0 5px 5px 0"></div>
<svg class="ic" width="15.5" height="16" viewBox="0 0 15.5 16" style="left:506.25px;top:18.0px;color:#8f8f8f"><path fill="currentColor" stroke="none" d="M7.750 0.300l7.500 5.800-7.500 5.800-7.500-5.800z"/><path fill="none" stroke="currentColor" stroke-linecap="round" stroke-linejoin="round" stroke-width="1.200" d="M0.800 9.500l6.950 5.500 6.950-5.500"/></svg>
<div class="a" style="left:538px;top:8px;width:32px;height:35.500px;background:#18171d;border-radius:5px 0 0 5px"></div>
<svg class="ic" width="16" height="16" viewBox="0 0 16 16" style="left:546.0px;top:18.0px;color:#8f8f8f"><circle fill="none" stroke="currentColor" stroke-linecap="round" stroke-linejoin="round" stroke-width="1.200" stroke-dasharray="2.600 1.100" cx="8" cy="8" r="5.200"/><path fill="none" stroke="currentColor" stroke-linecap="round" stroke-linejoin="round" stroke-width="1.200" stroke-dasharray="1.500 1" d="M8 0.200v3.200M8 12.600v3.200M0.200 8h3.200M12.600 8h3.200"/><path fill="currentColor" stroke="none" d="M7 7h2v2H7z"/></svg>
<div class="a" style="left:570px;top:8px;width:32px;height:35.500px;background:#0e0b13;border-radius:0 5px 5px 0"></div>
<svg class="ic" width="16" height="16" viewBox="0 0 16 16" style="left:577.9px;top:18.0px;color:#8f8f8f"><circle fill="none" stroke="currentColor" stroke-linecap="round" stroke-linejoin="round" stroke-width="1.150" cx="8" cy="8" r="7.300"/><path fill="none" stroke="currentColor" stroke-linecap="round" stroke-linejoin="round" stroke-width="1.150" d="M1 5.600h14M1 10.400h14M5.600 1.200v13.600M10.400 1.200v13.600M8 0.700v2M8 13.300v2"/></svg>
<div class="a" style="left:193.2px;top:8px;width:1px;height:35.500px;background:#26232b"></div>
<div class="a" style="left:265.2px;top:8px;width:1px;height:35.500px;background:#26232b"></div>
<div class="pill" style="left:4px;width:82px"></div>
<span class="t " style="left:8.5px;top:812.5px;color:#6a6a6a;letter-spacing:0">1216 x 837</span>
<div class="pill" style="left:94.5px;width:134px"></div>
<span class="t " style="left:99.0px;top:812.5px;color:#6a6a6a;letter-spacing:0">Geo: 21 / Tex: 11</span>
<div class="pill" style="left:236.5px;width:60px"></div>
<span class="t " style="left:241.0px;top:812.5px;color:#6a6a6a;letter-spacing:0">96 Tris</span>
<div class="pill" style="left:304.5px;width:45px"></div>
<span class="t " style="left:309.0px;top:812.5px;color:#6a6a6a;letter-spacing:0">0 Pts</span>
<div class="pill" style="left:357px;width:119.5px"></div>
<span class="t " style="left:361.5px;top:812.5px;color:#6a6a6a;letter-spacing:0">Distance: 12.97</span>
</div>
<span class="tab" style="left:317px;top:929px">Code</span>
<span class="tab" style="left:384px;top:929px">Cache</span>
<span class="tab" style="left:458px;top:929px">Resources</span>
<span class="tab" style="left:557.5px;top:929px">Variables</span>
<span class="tab" style="left:649px;top:929px">Jobs</span>
<span class="tab" style="left:711px;top:929px">Help</span>
<span class="tab" style="left:774.5px;top:929px">Composition</span>
<span class="tab" style="left:891px;top:929px">Asset Store</span>
<div class="a" style="left:982px;top:929px;width:55px;height:28px;background:#2c1e38;"></div>
<span class="tab" style="left:999px;top:929px">Log</span>
<svg class="ic " width="16" height="16" viewBox="0 0 16 16" style="left:1494px;top:935px;color:#b5adbd;"><path fill="none" stroke="currentColor" stroke-width="1.600" d="M0.800 5.500V0.800H5.500M10.500 0.800h4.700V5.500M15.200 10.500v4.700H10.500M5.500 15.200H0.800V10.500"/></svg>
<div class="a" style="left:301px;top:957px;width:1216px;height:31px;background:#2c1e38;"></div>
<div class="a" style="left:301px;top:988px;width:1216px;height:1px;background:#000;"></div>
<svg class="ic " width="15" height="15" viewBox="0.800 0.800 14.400 14.400" style="left:323.5px;top:965px;color:#f2f0f4;"><path fill="none" stroke="currentColor" stroke-linecap="round" stroke-linejoin="round" stroke-width="1.150" d="M1.800 4h12.400M5.800 3.800V2.300a.8.8 0 0 1 .8-.8h2.800a.8.8 0 0 1 .8.800v1.500M3.200 4.200l.6 9.300a1.200 1.200 0 0 0 1.200 1h6a1.200 1.200 0 0 0 1.200-1l.6-9.300M6.500 6.800v5M9.500 6.800v5"/></svg>
<span class="t ls" style="left:341.5px;top:964.5px;">Clear</span>
<div class="a" style="left:301px;top:989px;width:1216px;height:336px;overflow:hidden">
<div class="log" style="top:7px;left:9.500px"><i>02:44:09</i> <b>info</b></div><div class="log" style="top:7px;left:126.500px">[PROFILER] NkClient:post /api/folder/infolderquery: 213ms</div>
<div class="log" style="top:25px;left:9.500px"><i>02:44:09</i> <b>info</b></div><div class="log" style="top:25px;left:126.500px">[PROFILER] NkClient:post /api/folder/infolderquery: 242ms</div>
<div class="log" style="top:43px;left:9.500px"><i>02:44:10</i> <b>info</b></div><div class="log" style="top:43px;left:126.500px">[PROFILER] NkClient:get /api/folder/path/67335ba0935425afba937570: 71ms</div>
<div class="log" style="top:61px;left:9.500px"><i>02:44:10</i> <b>info</b></div><div class="log" style="top:61px;left:126.500px">[PROFILER] NkClient:get /api/folder/path/67335ba0935425afba937570: 113ms</div>
<div class="log" style="top:79px;left:9.500px"><i>02:44:10</i> <b>info</b></div><div class="log" style="top:79px;left:126.500px">[PROFILER] NkClient:get /api/item/aggregaterecursive/67335ba12f413c984e23553f?withAttachmentInfo: 587ms</div>
<div class="log" style="top:97px;left:9.500px"><i>02:44:10</i> <b>info</b></div><div class="log" style="top:97px;left:126.500px">[PROFILER] texture.js:Loading park_parking_1k: LOD 0: 47ms</div>
<div class="log" style="top:115px;left:9.500px"><i>02:44:10</i> <b>info</b></div><div class="log" style="top:115px;left:126.500px">[PROFILER] NkClient:get /api/item/thumbnail/32/67335ba12f413c984e23553f: 71ms</div>
<div class="log" style="top:133px;left:9.500px"><i>02:44:10</i> <b>info</b></div><div class="log" style="top:133px;left:126.500px">[TIMING] Seconds to ready: 1.176</div>
<div class="log" style="top:151px;left:9.500px"><i>02:44:10</i> <b>info</b></div><div class="log" style="top:151px;left:126.500px">[TIMING] Seconds to finished: 1.176</div>
<div class="log" style="top:169px;left:9.500px"><i>02:44:10</i> <b>info</b></div><div class="log" style="top:169px;left:126.500px">[PROFILER] NkClient:get /api/item/publicthumbnail/32/67335ba12f413c984e23553f: 31ms</div>
<div class="log" style="top:187px;left:9.500px"><i>02:44:10</i> <b>info</b></div><div class="log" style="top:187px;left:126.500px">[PROFILER] NkClient:get /api/item/thumbnail/32/67335ba12f413c984e235520: 40ms</div>
<div class="log" style="top:205px;left:9.500px"><i>02:44:10</i> <b>info</b></div><div class="log" style="top:205px;left:126.500px">[PROFILER] NkClient:get /api/item/publicthumbnail/32/67335ba12f413c984e235520: 25ms</div>
<div class="log" style="top:223px;left:9.500px"><i>02:44:11</i> <b>info</b></div><div class="log" style="top:223px;left:126.500px">Cache index saved.</div>
<div class="log" style="top:241px;left:9.500px"><i>02:44:16</i> <b>info</b></div><div class="log" style="top:241px;left:126.500px">[PROFILER] NkClient:get /api/folder/infolder/67335ba12f413c984e235526?resolve: 72ms</div>
<div class="log" style="top:259px;left:9.500px"><i>02:44:16</i> <b>info</b></div><div class="log" style="top:259px;left:126.500px">[PROFILER] NkClient:post /api/folder/aclquery: 78ms</div>
<div class="log" style="top:277px;left:9.500px"><i>02:44:17</i> <b>info</b></div><div class="log" style="top:277px;left:126.500px">[PROFILER] NkClient:get /api/item/infolder/67335ba12f413c984e235526: 68ms</div>
<div class="log" style="top:295px;left:9.500px"><i>02:44:17</i> <b>info</b></div><div class="log" style="top:295px;left:126.500px">[PROFILER] NkClient:get /api/item/thumbnail/32/67335ba22f413c984e235559: 75ms</div>
<div class="log" style="top:313px;left:9.500px"><i>02:44:17</i> <b>info</b></div><div class="log" style="top:313px;left:126.500px">[PROFILER] NkClient:get /api/item/thumbnail/32/67335ba22f413c984e235559: 123ms</div>
<div class="a" style="left:1193px;top:10px;width:1px;height:310px;background:#3a3440"></div>
<div class="a" style="left:1193.300px;top:198px;width:8.200px;height:130px;border-radius:4px;background:#3e3e3e"></div>
</div></main>
<aside id="inspector"><div class="a" style="left:1521px;top:60px;width:499px;height:1265px;background:#2c1e38;"></div>
<div class="a" style="left:1614px;top:60px;width:406px;height:28px;background:#130a1e;"></div>
<span class="tab" style="left:1537px;top:60px">Inspector</span>
<svg class="ic " width="16" height="16" viewBox="0 0 16 16" style="left:2001.5px;top:66px;color:#b5adbd;"><path fill="none" stroke="currentColor" stroke-width="1.600" d="M0.800 5.500V0.800H5.500M10.500 0.800h4.700V5.500M15.200 10.500v4.700H10.500M5.500 15.200H0.800V10.500"/></svg>
<span class="t " style="left:1530.3px;top:106.9px;letter-spacing:.22px;">Active item</span>
<div class="fld" style="left:1635px;top:104.2px;width:378px;height:23.7px;border-radius:5px"></div>
<svg class="ic " width="16.5" height="16.5" viewBox="0.800 0.800 14.400 14.400" style="left:1643.8px;top:107px;color:#fff;"><path fill="currentColor" stroke="none" d="M5.500 1h5v4.500h-5z"/><path fill="none" stroke="currentColor" stroke-linecap="round" stroke-linejoin="round" stroke-width="1.150" d="M8 5.500v3M3.200 11V8.500h9.600V11"/><rect fill="none" stroke="currentColor" stroke-linecap="round" stroke-linejoin="round" stroke-width="1.150" x="1.200" y="11" width="4" height="4" rx="1"/><rect fill="none" stroke="currentColor" stroke-linecap="round" stroke-linejoin="round" stroke-width="1.150" x="10.800" y="11" width="4" height="4" rx="1"/></svg>
<svg class="ic" width="12.400" height="10.400" viewBox="1 2.500 13 11" style="left:1666px;top:110.400px;color:#6d6475"><path fill="currentColor" stroke="none" d="M1 8l6-5.500V6h7v4H7v3.500z"/></svg>
<svg class="ic" width="12.400" height="10.400" viewBox="2 2.500 13 11" style="left:1686.600px;top:110.400px;color:#6d6475"><path fill="currentColor" stroke="none" d="M15 8L9 2.500V6H2v4h7v3.500z"/></svg>
<svg class="ic" width="14.8" height="16.4" viewBox="0 0 14 16" style="left:1708.5px;top:108px;color:#fff"><path fill="none" stroke="currentColor" stroke-linecap="round" stroke-linejoin="round" stroke-width="1.250" d="M2.400 0.650h6.200l4.750 4.750v8.200a1.750 1.750 0 0 1-1.750 1.750H2.400A1.750 1.750 0 0 1 .650 13.600V2.400A1.750 1.750 0 0 1 2.400.650zM8.500 0.900v4.600h4.600"/><path fill="currentColor" stroke="none" d="M4.400 8l.8 1.900 1.900.8-1.900.8-.8 1.900-.8-1.900-1.900-.8 1.900-.8zM9.700 7.400l.6 1.300 1.300.6-1.300.6-.6 1.300-.6-1.300-1.300-.6 1.300-.6zM7.600 11.700l.5 1.100 1.100.5-1.100.5-.5 1.100-.5-1.100-1.100-.5 1.100-.5z"/></svg>
<span class="t " style="left:1730px;top:109.0px;letter-spacing:.22px;">Main</span>
<svg class="ic " width="10.4" height="5.6" viewBox="0 0 10.4 5.6" style="left:1994.900px;top:114.800px"><path fill="#b9b5bd" d="M0 0h10.400L5.200 5.600z"/></svg>
<div class="a" style="left:1529px;top:132px;width:32px;height:64px;background:#130a1e;"></div>
<div class="a" style="left:1529px;top:132px;width:2.2px;height:32px;background:#fff;"></div>
<svg class="ic " width="17" height="17" viewBox="0 0 16 16" style="left:1536.5px;top:139.5px;color:#fff;"><path fill="none" stroke="currentColor" stroke-linecap="round" stroke-linejoin="round" stroke-width="1.300" d="M5.500 3h9.500M5.500 8h9.500M5.500 13h9.500"/><circle fill="currentColor" stroke="none" cx="1.800" cy="3" r="1.300"/><circle fill="currentColor" stroke="none" cx="1.800" cy="8" r="1.300"/><circle fill="currentColor" stroke="none" cx="1.800" cy="13" r="1.300"/></svg>
<svg class="ic " width="16" height="16" viewBox="0 0 16 16" style="left:1537px;top:172px;color:#fff;"><path fill="none" stroke="currentColor" stroke-linecap="round" stroke-linejoin="round" stroke-width="1.400" d="M3.200 0.700v14.600M12.500 0.700v14.600"/><circle fill="currentColor" stroke="none" cx="3.200" cy="5.300" r="2.600"/><circle fill="currentColor" stroke="none" cx="12.500" cy="10.600" r="2.600"/></svg>
<div class="a" style="left:1563px;top:134.1px;width:450px;height:25.700px;background:#130a1e;border-radius:4px 4px 0 0"></div>
<span class="t h14" style="left:1570.5px;top:138.1px;">Scenes</span>
<svg class="ic" width="12.400" height="6.600" viewBox="0 0 12.400 6.600" style="left:1989px;top:144.7px;color:#f2f0f4"><path fill="none" stroke="currentColor" stroke-linecap="round" stroke-linejoin="round" stroke-width="1.400" d="M0.800 5.800L6.200 0.800l5.400 5"/></svg>
<div class="a" style="left:1569px;top:166px;width:438px;height:304.8px;background:#130a1e;border-radius:6px"></div>
<span class="t h14" style="left:1580.3px;top:186.3px;">Scene 1</span>
<svg class="ic " width="14.5" height="14.5" viewBox="0.800 0.800 14.400 14.400" style="left:1957px;top:188px;color:#f2f0f4;"><path fill="none" stroke="currentColor" stroke-linecap="round" stroke-linejoin="round" stroke-width="1.150" d="M1.800 4h12.400M5.800 3.800V2.300a.8.8 0 0 1 .8-.8h2.800a.8.8 0 0 1 .8.800v1.500M3.200 4.200l.6 9.300a1.200 1.200 0 0 0 1.200 1h6a1.200 1.200 0 0 0 1.200-1l.6-9.300M6.500 6.800v5M9.500 6.800v5"/></svg>
<svg class="ic" width="12.400" height="6.600" viewBox="0 0 12.400 6.600" style="left:1978.9px;top:192.8px;color:#f2f0f4"><path fill="none" stroke="currentColor" stroke-linecap="round" stroke-linejoin="round" stroke-width="1.400" d="M0.800 5.800L6.200 0.800l5.400 5"/></svg>
<div class="a" style="left:1573px;top:208px;width:430px;height:215px;background:#2c1e38;border-radius:0 0 5px 5px"></div>
<svg class="ic " width="16.5" height="16.5" viewBox="0 0 16.500 16.500" style="left:1839.8px;top:217.6px;color:#f2f0f4;"><path fill="none" stroke="currentColor" stroke-linecap="round" stroke-linejoin="round" stroke-width="1.250" d="M8.600 0.700h4.300l3 3v7.300a.6.6 0 0 1-.6.600H8.600a.6.6 0 0 1-.6-.600V1.300a.6.6 0 0 1 .6-.600zM5.800 5H1.300a.6.6 0 0 0-.6.600v9.600a.6.6 0 0 0 .6.600h6.500a.6.6 0 0 0 .6-.600V13.700"/></svg>
<span class="t ls" style="left:1863.3px;top:217.8px;">Copy</span>
<svg class="ic " width="16.5" height="16.5" viewBox="0 0 16.500 16.500" style="left:1922.8px;top:217.6px;color:#f2f0f4;"><path fill="none" stroke="currentColor" stroke-linecap="round" stroke-linejoin="round" stroke-width="1.250" d="M5.300 11.600H1.300a.6.6 0 0 1-.6-.600V1.300a.6.6 0 0 1 .6-.600h4.400l2.800 2.800M7.800 4.900h5.300l3 3v7.400a.6.6 0 0 1-.6.600H7.800a.6.6 0 0 1-.6-.600V5.500a.6.6 0 0 1 .6-.600z"/></svg>
<span class="t ls" style="left:1946.1px;top:217.8px;">Paste</span>
<span class="t " style="left:1578.5px;top:249.8px;letter-spacing:.22px;">Scene</span>
<div class="fld" style="left:1723px;top:244.1px;width:273.8px;height:23.7px;border-radius:5px"></div>
<span class="t " style="left:1578.5px;top:279.8px;letter-spacing:.22px;">Load</span>
<div class="fld" style="left:1723px;top:274.1px;width:273.8px;height:23.7px;border-radius:5px"></div>
<span class="t " style="left:1578.5px;top:309.8px;letter-spacing:.22px;">Active</span>
<div class="fld" style="left:1723px;top:304.1px;width:273.8px;height:23.7px;border-radius:5px"></div>
<span class="t " style="left:1578.5px;top:339.8px;letter-spacing:.22px;">Primary</span>
<div class="fld" style="left:1723px;top:334.1px;width:273.8px;height:23.7px;border-radius:5px"></div>
<span class="t " style="left:1578.5px;top:369.8px;letter-spacing:.22px;">Exclude in packages</span>
<div class="fld" style="left:1723px;top:364.1px;width:273.8px;height:23.7px;border-radius:5px"></div>
<svg class="ic" width="17.4" height="19" viewBox="0 0 14 16" style="left:1734.2px;top:248.2px;color:#fff"><path fill="none" stroke="currentColor" stroke-linecap="round" stroke-linejoin="round" stroke-width="1.250" d="M2.400 0.650h6.200l4.750 4.750v8.200a1.750 1.750 0 0 1-1.750 1.750H2.400A1.750 1.750 0 0 1 .650 13.600V2.400A1.750 1.750 0 0 1 2.400.650zM8.500 0.900v4.600h4.600"/><path fill="currentColor" stroke="none" d="M2.100 13l3.300-6.300 3.300 6.300z"/><circle fill="currentColor" stroke="none" cx="10" cy="11.700" r="2.100"/><path fill="currentColor" stroke="none" d="M9.700 6.900h1.900v1.900H9.700z"/></svg>
<span class="t " style="left:1761px;top:247.9px;letter-spacing:.22px;">MainScene</span>
<svg class="ic " width="14.5" height="14.5" viewBox="0.800 0.800 14.400 14.400" style="left:1906px;top:250px;color:#f2f0f4;"><path fill="none" stroke="currentColor" stroke-linecap="round" stroke-linejoin="round" stroke-width="1.150" d="M1.800 4h12.400M5.800 3.800V2.300a.8.8 0 0 1 .8-.8h2.800a.8.8 0 0 1 .8.800v1.500M3.200 4.200l.6 9.300a1.200 1.200 0 0 0 1.200 1h6a1.200 1.200 0 0 0 1.200-1l.6-9.300M6.500 6.800v5M9.500 6.800v5"/></svg>
<svg class="ic " width="13.2" height="13.2" viewBox="1 1 14 14" style="left:1928px;top:251px;color:#f2f0f4;"><path fill="none" stroke="currentColor" stroke-linecap="round" stroke-linejoin="round" stroke-width="1.300" d="M8 1.500v13M1.500 8h13"/></svg>
<svg class="ic " width="15.5" height="15.5" viewBox="0.800 0.800 14.400 14.400" style="left:1950.5px;top:250px;color:#f2f0f4;"><circle fill="none" stroke="currentColor" stroke-linecap="round" stroke-linejoin="round" stroke-width="1.300" cx="9.500" cy="6.500" r="4.800"/><path fill="none" stroke="currentColor" stroke-linecap="round" stroke-linejoin="round" stroke-width="1.300" d="M6 10L1.500 14.500"/></svg>
<svg class="ic " width="14.2" height="14.2" viewBox="0.800 0.800 14.400 14.400" style="left:1972px;top:250.4px;color:#f2f0f4;"><path fill="none" stroke="currentColor" stroke-linecap="round" stroke-linejoin="round" stroke-width="1.300" d="M1 8h13.500M9.500 2.500L15 8l-5.500 5.500"/></svg>
<div class="cb on" style="left:1731.8px;top:280.4px"></div><svg class="ic " width="14" height="14" viewBox="0 0 14 14" style="left:1731.8px;top:280.4px"><path fill="none" stroke="#1a0f24" stroke-width="1.700" stroke-linecap="round" stroke-linejoin="round" d="M3 7.300l2.700 2.700L11 4.300"/></svg>
<div class="cb on" style="left:1731.8px;top:310.4px"></div><svg class="ic " width="14" height="14" viewBox="0 0 14 14" style="left:1731.8px;top:310.4px"><path fill="none" stroke="#1a0f24" stroke-width="1.700" stroke-linecap="round" stroke-linejoin="round" d="M3 7.300l2.700 2.700L11 4.300"/></svg>
<div class="cb off" style="left:1731.8px;top:340.4px"></div>
<div class="cb off" style="left:1731.8px;top:370.4px"></div>
<span class="t " style="left:1578.5px;top:400.0px;letter-spacing:.22px;">Transform</span>
<div class="fld" style="left:1723px;top:393.2px;width:35.8px;height:19.8px;border-radius:5px"></div>
<svg class="ic " width="13" height="13" viewBox="0 0 16 16" style="left:1734.5px;top:397.3px;color:#f2f0f4;"><path fill="none" stroke="currentColor" stroke-linecap="round" stroke-linejoin="round" stroke-width="1.200" d="M3 5.500l5 5 5-5"/></svg>
<div class="fld" style="left:1767px;top:393.2px;width:97px;height:21.8px;border-radius:4px"></div>
<span class="t " style="left:1771.3px;top:396.9px;letter-spacing:.22px;">No transform</span>
<svg class="ic " width="9.4" height="9.4" viewBox="1 1 14 14" style="left:1907px;top:447.5px;color:#f2f0f4;stroke-width:2"><path fill="none" stroke="currentColor" stroke-linecap="round" stroke-linejoin="round" stroke-width="1.300" d="M8 1.500v13M1.500 8h13"/></svg>
<span class="t ls" style="left:1920.2px;top:444.7px;">New Scene</span>
<div class="a" style="left:1563px;top:497.1px;width:450px;height:25.700px;background:#130a1e;border-radius:4px 4px 0 0"></div>
<span class="t h14" style="left:1570.5px;top:501.1px;">Variable Sets</span>
<svg class="ic" width="12.400" height="6.600" viewBox="0 0 12.400 6.600" style="left:1989px;top:507.70000000000005px;color:#f2f0f4"><path fill="none" stroke="currentColor" stroke-linecap="round" stroke-linejoin="round" stroke-width="1.400" d="M0.800 5.800L6.200 0.800l5.400 5"/></svg>
<div class="a" style="left:1569px;top:529px;width:438px;height:51.8px;background:#130a1e;border-radius:6px"></div>
<span class="t " style="left:1572px;top:550.5px;letter-spacing:.22px;">No entries</span>
<svg class="ic " width="9.4" height="9.4" viewBox="1 1 14 14" style="left:1849px;top:549.8px;color:#f2f0f4;"><path fill="none" stroke="currentColor" stroke-linecap="round" stroke-linejoin="round" stroke-width="1.300" d="M8 1.500v13M1.500 8h13"/></svg>
<span class="t ls" style="left:1862.3px;top:546.5px;">New Variable set</span>
<div class="a" style="left:1563px;top:607.1px;width:450px;height:25.700px;background:#130a1e;border-radius:4px 4px 0 0"></div>
<span class="t h14" style="left:1570.5px;top:611.1px;">Physics</span>
<svg class="ic" width="12.400" height="6.600" viewBox="0 0 12.400 6.600" style="left:1989px;top:617.7px;color:#f2f0f4"><path fill="none" stroke="currentColor" stroke-linecap="round" stroke-linejoin="round" stroke-width="1.400" d="M0.800 5.800L6.200 0.800l5.400 5"/></svg>
<svg class="ic " width="16.5" height="16.5" viewBox="0 0 16.500 16.500" style="left:1849.8px;top:642.5px;color:#f2f0f4;"><path fill="none" stroke="currentColor" stroke-linecap="round" stroke-linejoin="round" stroke-width="1.250" d="M8.600 0.700h4.300l3 3v7.300a.6.6 0 0 1-.6.600H8.600a.6.6 0 0 1-.6-.600V1.300a.6.6 0 0 1 .6-.600zM5.800 5H1.300a.6.6 0 0 0-.6.600v9.600a.6.6 0 0 0 .6.600h6.500a.6.6 0 0 0 .6-.600V13.700"/></svg>
<span class="t ls" style="left:1873.3px;top:642.7px;">Copy</span>
<svg class="ic " width="16.5" height="16.5" viewBox="0 0 16.500 16.500" style="left:1932.8px;top:642.5px;color:#f2f0f4;"><path fill="none" stroke="currentColor" stroke-linecap="round" stroke-linejoin="round" stroke-width="1.250" d="M5.300 11.600H1.300a.6.6 0 0 1-.6-.600V1.300a.6.6 0 0 1 .6-.600h4.400l2.800 2.800M7.800 4.900h5.300l3 3v7.400a.6.6 0 0 1-.6.600H7.800a.6.6 0 0 1-.6-.600V5.500a.6.6 0 0 1 .6-.600z"/></svg>
<span class="t ls" style="left:1956.1px;top:642.7px;">Paste</span>
<span class="t " style="left:1568.3px;top:674.6px;letter-spacing:.22px;">Enabled</span>
<div class="fld" style="left:1713px;top:669.2px;width:293.8px;height:23.7px;border-radius:5px"></div>
<div class="cb on" style="left:1721.2px;top:675.4px"></div><svg class="ic " width="14" height="14" viewBox="0 0 14 14" style="left:1721.2px;top:675.4px"><path fill="none" stroke="#1a0f24" stroke-width="1.700" stroke-linecap="round" stroke-linejoin="round" d="M3 7.300l2.700 2.700L11 4.300"/></svg>
<span class="t " style="left:1568.3px;top:704.9px;letter-spacing:.22px;">Gravity</span>
<span class="t " style="left:1785.3px;top:706.8px;letter-spacing:.22px;">X:</span>
<div class="fld" style="left:1804px;top:701.4px;width:201px;height:23.5px;border-radius:5px"></div>
<span class="t " style="left:1811px;top:708.0px;letter-spacing:.08px;">0</span>
<span class="t " style="left:1785.3px;top:736.8px;letter-spacing:.22px;">Y:</span>
<div class="fld" style="left:1804px;top:731.4px;width:201px;height:23.5px;border-radius:5px"></div>
<span class="t " style="left:1811px;top:738.0px;letter-spacing:.08px;">-9,81</span>
<span class="t " style="left:1785.3px;top:766.8px;letter-spacing:.22px;">Z:</span>
<div class="fld" style="left:1804px;top:761.4px;width:201px;height:23.5px;border-radius:5px"></div>
<span class="t " style="left:1811px;top:768.0px;letter-spacing:.08px;">0</span>
<span class="t " style="left:1568.3px;top:798.9px;letter-spacing:.22px;">Collision matrix</span>
<svg class="ic " width="16" height="16" viewBox="0 0 16 16" style="left:1692px;top:800px;color:#fff;"><circle fill="currentColor" stroke="none" cx="8" cy="8" r="8"/><path fill="#1a0f24" d="M7 3.300h2v2H7zM6 6.800h3v4.700h1.200v1.400H5.800v-1.400H7V8.200H6z"/></svg>
<div class="fld" style="left:1711px;top:791.2px;width:295.8px;height:27.6px;border-radius:5px"></div>
<span class="t ls" style="left:1813.5px;top:797.2px;">Edit Matrix</span>
<div class="a" style="left:1563px;top:835.3px;width:450px;height:25.700px;background:#130a1e;border-radius:4px 4px 0 0"></div>
<span class="t h14" style="left:1570.5px;top:839.3px;">Resources</span>
<svg class="ic" width="12.400" height="6.600" viewBox="0 0 12.400 6.600" style="left:1989px;top:845.9px;color:#f2f0f4"><path fill="none" stroke="currentColor" stroke-linecap="round" stroke-linejoin="round" stroke-width="1.400" d="M0.800 5.800L6.200 0.800l5.400 5"/></svg>
<svg class="ic " width="16.5" height="16.5" viewBox="0 0 16.500 16.500" style="left:1849.8px;top:870.7px;color:#f2f0f4;"><path fill="none" stroke="currentColor" stroke-linecap="round" stroke-linejoin="round" stroke-width="1.250" d="M8.600 0.700h4.300l3 3v7.300a.6.6 0 0 1-.6.600H8.600a.6.6 0 0 1-.6-.600V1.300a.6.6 0 0 1 .6-.600zM5.800 5H1.300a.6.6 0 0 0-.6.600v9.600a.6.6 0 0 0 .6.600h6.500a.6.6 0 0 0 .6-.600V13.700"/></svg>
<span class="t ls" style="left:1873.3px;top:870.9px;">Copy</span>
<svg class="ic " width="16.5" height="16.5" viewBox="0 0 16.500 16.500" style="left:1932.8px;top:870.7px;color:#f2f0f4;"><path fill="none" stroke="currentColor" stroke-linecap="round" stroke-linejoin="round" stroke-width="1.250" d="M5.300 11.600H1.300a.6.6 0 0 1-.6-.600V1.300a.6.6 0 0 1 .6-.600h4.400l2.800 2.800M7.800 4.900h5.300l3 3v7.400a.6.6 0 0 1-.6.600H7.800a.6.6 0 0 1-.6-.600V5.500a.6.6 0 0 1 .6-.600z"/></svg>
<span class="t ls" style="left:1956.1px;top:870.9px;">Paste</span>
<span class="t " style="left:1568.3px;top:902.8px;letter-spacing:.22px;">Start execution</span>
<svg class="ic " width="16" height="16" viewBox="0 0 16 16" style="left:1685px;top:904px;color:#fff;"><circle fill="currentColor" stroke="none" cx="8" cy="8" r="8"/><path fill="#1a0f24" d="M7 3.300h2v2H7zM6 6.800h3v4.700h1.200v1.400H5.800v-1.400H7V8.200H6z"/></svg>
<div class="fld" style="left:1706px;top:897.4px;width:300.8px;height:23.5px;border-radius:5px"></div>
<span class="t " style="left:1713px;top:901.7px;letter-spacing:.08px;">After loading everything</span>
<svg class="ic " width="10.4" height="5.6" viewBox="0 0 10.4 5.6" style="left:1985.900px;top:907.700px"><path fill="#b9b5bd" d="M0 0h10.400L5.200 5.600z"/></svg>
<span class="t " style="left:1568.3px;top:933.3px;letter-spacing:.22px;">Layer names</span>
<svg class="ic " width="16" height="16" viewBox="0 0 16 16" style="left:1655px;top:934px;color:#fff;"><circle fill="currentColor" stroke="none" cx="8" cy="8" r="8"/><path fill="#1a0f24" d="M7 3.300h2v2H7zM6 6.800h3v4.700h1.200v1.400H5.800v-1.400H7V8.200H6z"/></svg>
<div class="a" style="left:1700px;top:925.400px;width:307px;height:199.200px;overflow:hidden">
<div class="a" style="left:295.3px;top:0px;width:11.6px;height:200px;background:#130a1e;"></div>
<div class="a" style="left:298.1px;top:2.8px;width:5.8px;height:36.7px;background:#3b3848;border-radius:3px"></div>
<span class="t " style="left:5.3px;top:6.8px;">0</span>
<div class="fld" style="left:34px;top:3.8px;width:259px;height:23.6px;border-radius:5px"></div>
<span class="t " style="left:44.2px;top:10.6px;letter-spacing:.08px;">Default</span>
<span class="t " style="left:5.3px;top:36.8px;">1</span>
<div class="fld" style="left:34px;top:33.8px;width:259px;height:23.6px;border-radius:5px"></div>
<span class="t " style="left:44.2px;top:40.6px;letter-spacing:.08px;">Terrain</span>
<span class="t " style="left:5.3px;top:66.8px;">2</span>
<div class="fld" style="left:34px;top:63.8px;width:259px;height:23.6px;border-radius:5px"></div>
<span class="t " style="left:44.2px;top:70.6px;letter-spacing:.08px;">TransparentFX</span>
<span class="t " style="left:5.3px;top:96.8px;">3</span>
<div class="fld" style="left:34px;top:93.8px;width:259px;height:23.6px;border-radius:5px"></div>
<span class="t " style="left:44.2px;top:100.6px;letter-spacing:.08px;">Water</span>
<span class="t " style="left:5.3px;top:126.8px;">4</span>
<div class="fld" style="left:34px;top:123.8px;width:259px;height:23.6px;border-radius:5px"></div>
<span class="t " style="left:5.3px;top:156.8px;">5</span>
<div class="fld" style="left:34px;top:153.8px;width:259px;height:23.6px;border-radius:5px"></div>
<span class="t " style="left:5.3px;top:186.8px;">6</span>
<div class="fld" style="left:34px;top:183.8px;width:259px;height:23.6px;border-radius:5px"></div>
</div>
<div class="a" style="left:1563px;top:1141.2px;width:450px;height:25.700px;background:#130a1e;border-radius:4px 4px 0 0"></div>
<span class="t h14" style="left:1570.5px;top:1145.2px;">Controls</span>
<svg class="ic" width="12.400" height="6.600" viewBox="0 0 12.400 6.600" style="left:1989px;top:1151.8px;color:#f2f0f4"><path fill="none" stroke="currentColor" stroke-linecap="round" stroke-linejoin="round" stroke-width="1.400" d="M0.800 5.800L6.200 0.800l5.400 5"/></svg>
<svg class="ic " width="16.5" height="16.5" viewBox="0 0 16.500 16.500" style="left:1849.8px;top:1176.9px;color:#f2f0f4;"><path fill="none" stroke="currentColor" stroke-linecap="round" stroke-linejoin="round" stroke-width="1.250" d="M8.600 0.700h4.300l3 3v7.300a.6.6 0 0 1-.6.600H8.600a.6.6 0 0 1-.6-.600V1.300a.6.6 0 0 1 .6-.600zM5.800 5H1.300a.6.6 0 0 0-.6.600v9.600a.6.6 0 0 0 .6.600h6.500a.6.6 0 0 0 .6-.600V13.700"/></svg>
<span class="t ls" style="left:1873.3px;top:1177.1px;">Copy</span>
<svg class="ic " width="16.5" height="16.5" viewBox="0 0 16.500 16.500" style="left:1932.8px;top:1176.9px;color:#f2f0f4;"><path fill="none" stroke="currentColor" stroke-linecap="round" stroke-linejoin="round" stroke-width="1.250" d="M5.300 11.600H1.300a.6.6 0 0 1-.6-.600V1.300a.6.6 0 0 1 .6-.600h4.400l2.800 2.800M7.800 4.900h5.300l3 3v7.400a.6.6 0 0 1-.6.600H7.800a.6.6 0 0 1-.6-.600V5.500a.6.6 0 0 1 .6-.600z"/></svg>
<span class="t ls" style="left:1956.1px;top:1177.1px;">Paste</span>
<span class="t " style="left:1568.3px;top:1209.0px;letter-spacing:.22px;">Automatic pointer lock</span>
<svg class="ic " width="16" height="16" viewBox="0 0 16 16" style="left:1737px;top:1210px;color:#fff;"><circle fill="currentColor" stroke="none" cx="8" cy="8" r="8"/><path fill="#1a0f24" d="M7 3.300h2v2H7zM6 6.800h3v4.700h1.200v1.400H5.800v-1.400H7V8.200H6z"/></svg>
<div class="fld" style="left:1758px;top:1203.3px;width:248.8px;height:23.5px;border-radius:5px"></div>
<div class="cb off" style="left:1765.9px;top:1209.5px"></div></aside>
</div>
</body></html>
